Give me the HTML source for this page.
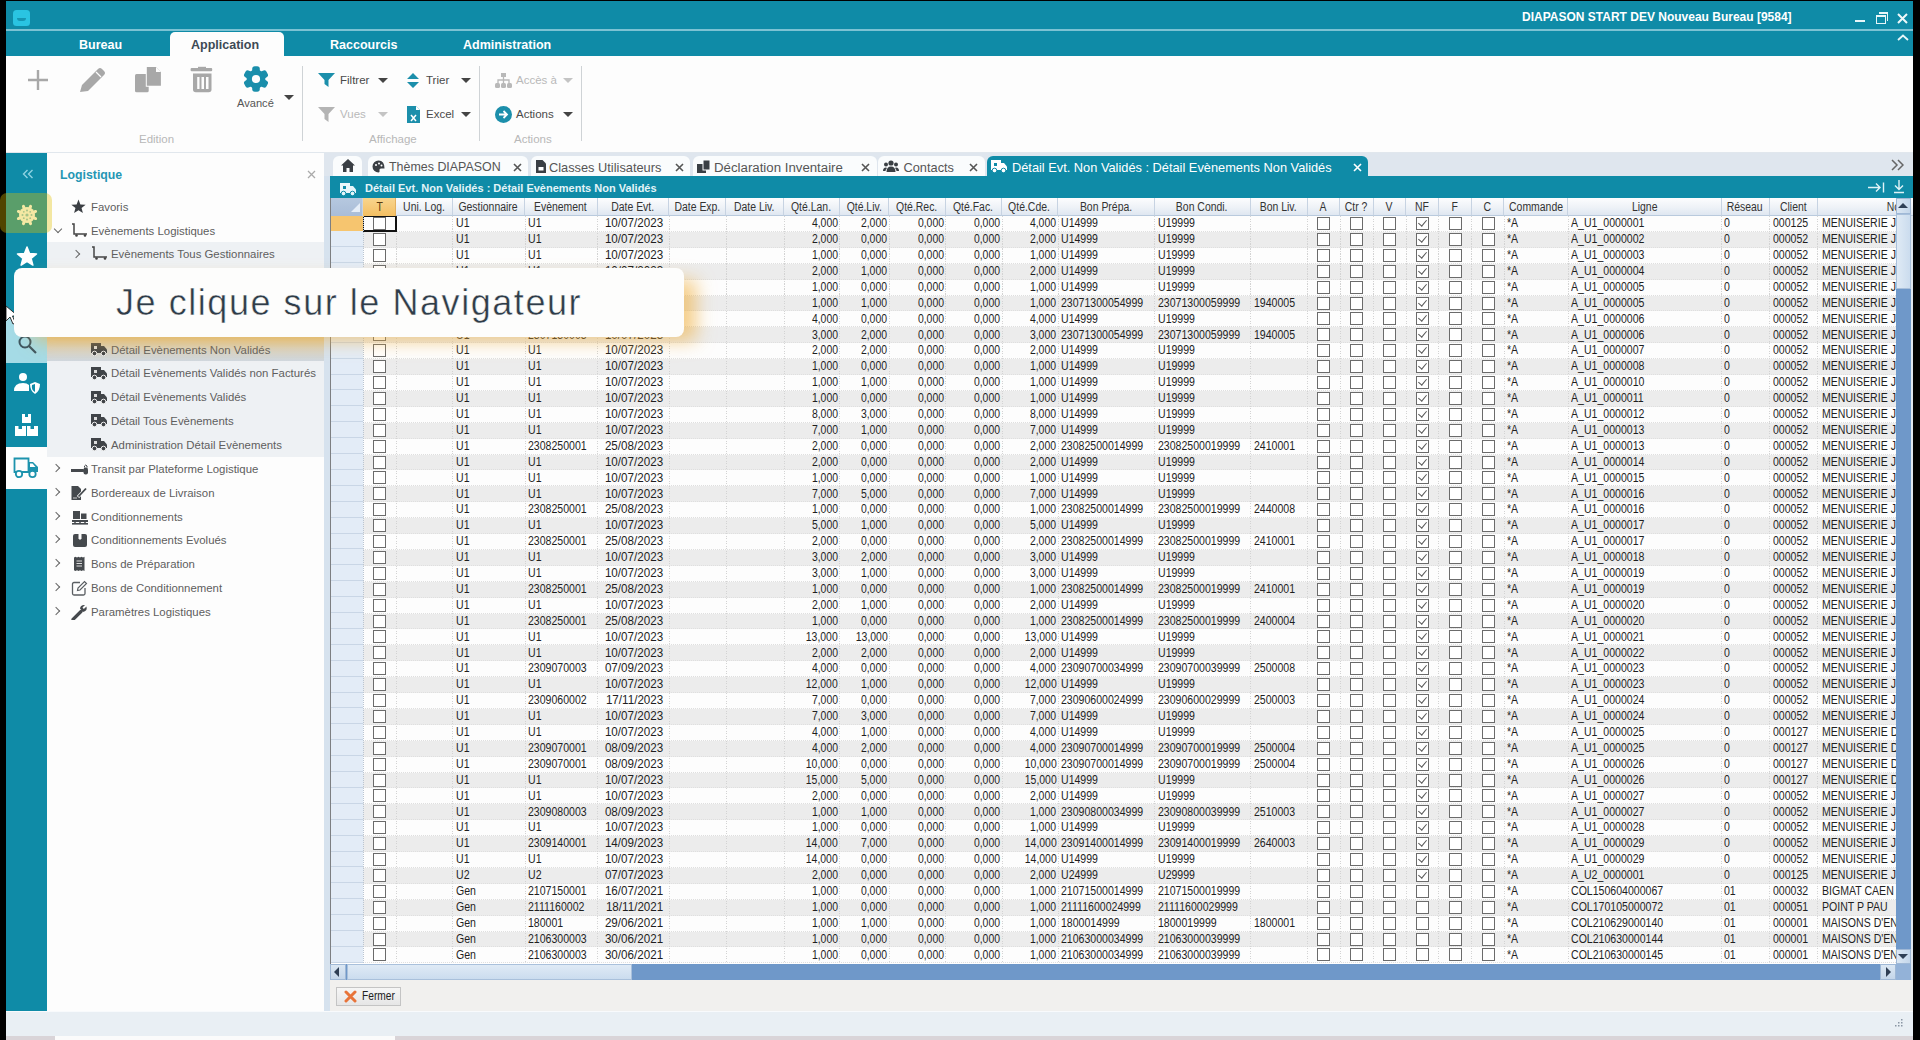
<!DOCTYPE html><html><head><meta charset="utf-8"><style>
*{margin:0;padding:0;box-sizing:border-box}
html,body{width:1920px;height:1040px;overflow:hidden;background:#000;font-family:"Liberation Sans",sans-serif}
.a{position:absolute}
#app{position:absolute;left:6px;top:1px;width:1907px;height:1035px;background:#fdfdfd;overflow:hidden}
.tt{color:#fff;font-weight:bold;white-space:nowrap}
.rb{position:absolute;font-size:11.5px;color:#4a4a4a;white-space:nowrap}
.dis{color:#b9b9b9}
.tri{position:absolute;width:0;height:0;border-left:5px solid transparent;border-right:5px solid transparent;border-top:5px solid #444}
.tri.dis{border-top-color:#c4c4c4}
.glab{position:absolute;font-size:11.5px;color:#b8b8b8;white-space:nowrap}
.vsep{position:absolute;width:1px;background:#cfd3d6}
.tr{position:absolute;font-size:11.4px;color:#5e5e5e;white-space:nowrap}
.chev{position:absolute;width:6px;height:6px;border-right:1.5px solid #666;border-bottom:1.5px solid #666}
.tab{position:absolute;top:155px;height:21px;background:#fafcfd;border-radius:6px 6px 0 0}
.tabt{position:absolute;top:159px;font-size:12.8px;color:#555;white-space:nowrap}
.tabx{position:absolute;top:159px;font-size:14px;color:#555;line-height:14px}
.hd{position:absolute;top:197.5px;height:18px;background:linear-gradient(#fdfdfe,#eef2f7 55%,#dfe7f1);border-right:1px solid #c7d3e2;border-bottom:1px solid #b9cadd;font-size:12px;color:#333;text-align:center;line-height:18.5px;white-space:nowrap;overflow:hidden}
.hd span{display:inline-block;transform:scaleX(.87)}
.row{position:absolute;left:330px;width:1566px;height:15.9px}
.cl{position:absolute;top:0.8px;height:15.9px;font-size:12px;color:#1f1f1f;line-height:15.9px;white-space:nowrap}
.cl span{display:inline-block}
.L span{transform:scaleX(.88);transform-origin:0 50%}
.R{text-align:right}
.R span{transform:scaleX(.87);transform-origin:100% 50%}
.Cc{text-align:center}
.Cc{padding-left:1.5px}
.Cc span{transform:scaleX(.97);transform-origin:50% 50%}
.cb{position:absolute;width:13px;height:13px;border:1.5px solid #6b6b6b;background:#fff}
.cb.k::after{content:"";position:absolute;left:3px;top:0px;width:4px;height:7px;border-right:1.5px solid #555;border-bottom:1.5px solid #555;transform:rotate(40deg)}
</style></head><body>
<div id="app">
<div class="a" style="left:0px;top:0px;width:1907px;height:55px;background:#0f8ba7"></div>
<div class="a" style="left:0px;top:27.8px;width:1907px;height:2.4px;background:#7cc2d3"></div>
<div class="a" style="left:7px;top:9px;width:16.5px;height:16px;background:#2ac4e2;border-radius:3.5px"></div>
<div class="a" style="left:11px;top:16.5px;width:8.5px;height:3px;background:#1596b3;border-radius:0 0 4px 4px"></div>
<div class="a tt" style="left:1516px;top:9px;font-size:12px;line-height:14px">DIAPASON START DEV Nouveau Bureau [9584]</div>
<div class="a" style="left:1849px;top:19px;width:10px;height:2px;background:#e8f6f9"></div>
<div class="a" style="left:1870px;top:14px;width:10px;height:9px;border:1.5px solid #e8f6f9;border-top-width:2.5px"></div>
<div class="a" style="left:1873px;top:11px;width:9px;height:9px;border-top:2px solid #e8f6f9;border-right:1.5px solid #e8f6f9"></div>
<svg class="a" style="left:1891px;top:12px" width="11" height="11"><path d="M1 1L10 10M10 1L1 10" stroke="#eef8fa" stroke-width="2"/></svg>
<svg class="a" style="left:1891px;top:33px" width="12" height="8"><path d="M1 6L6 1.5L11 6" stroke="#e8f6f9" stroke-width="1.8" fill="none"/></svg>
<div class="a" style="left:164px;top:31px;width:114px;height:25px;background:#fdfdfd;border-radius:5px 5px 0 0"></div>
<div class="a tt" style="left:73px;top:37px;font-size:12.5px;line-height:14px">Bureau</div>
<div class="a" style="left:185px;top:37px;font-size:12.5px;line-height:14px;color:#3d4a55;font-weight:bold;white-space:nowrap">Application</div>
<div class="a tt" style="left:324px;top:37px;font-size:12.5px;line-height:14px">Raccourcis</div>
<div class="a tt" style="left:457px;top:37px;font-size:12.5px;line-height:14px">Administration</div>
<div class="a" style="left:0px;top:55px;width:1907px;height:96px;background:#fdfdfd"></div>
<div class="a" style="left:0px;top:151px;width:1907px;height:1px;background:#e1e7ed"></div>
<svg class="a" style="left:21px;top:68px" width="22" height="22"><path d="M11 1V21M1 11H21" stroke="#a8a8a8" stroke-width="2.4"/></svg>
<svg class="a" style="left:73px;top:66px" width="28" height="27"><path d="M1 25L3 18L19 2Q21 0 23 2L25 4Q27 6 25 8L9 24Z" fill="#a8a8a8"/><path d="M17 5L22 10" stroke="#fdfdfd" stroke-width="1.2"/></svg>
<svg class="a" style="left:128px;top:65px" width="28" height="28"><rect x="1" y="8" width="13.7" height="18.3" rx="1.5" fill="#a8a8a8"/><path d="M11.8 0H22.5L27.9 5.4V20.8H11.8Z" fill="#fdfdfd"/><path d="M12.8 1H22L26.9 5.9V19.8H12.8Z" fill="#a8a8a8"/><path d="M22 1V6H27" fill="#fdfdfd"/></svg>
<svg class="a" style="left:184px;top:65px" width="24" height="28"><rect x="0.6" y="2" width="21.6" height="3.3" rx="1" fill="#a8a8a8"/><rect x="8" y="0.8" width="8" height="2" fill="#a8a8a8"/><path d="M3 7.6H21.5V23.5Q21.5 26.3 18.7 26.3H5.8Q3 26.3 3 23.5Z" fill="#a8a8a8"/><path d="M7.2 11H9.5V23H7.2ZM11.5 11H14V23H11.5ZM16 11H18.5V23H16Z" fill="#fdfdfd"/></svg>
<svg class="a" style="left:237px;top:65px" width="26" height="26"><rect x="9.2" y="0.3" width="7.6" height="7" rx="2.6" fill="#1a8eab" transform="rotate(0 13 13)"/><rect x="9.2" y="0.3" width="7.6" height="7" rx="2.6" fill="#1a8eab" transform="rotate(60 13 13)"/><rect x="9.2" y="0.3" width="7.6" height="7" rx="2.6" fill="#1a8eab" transform="rotate(120 13 13)"/><rect x="9.2" y="0.3" width="7.6" height="7" rx="2.6" fill="#1a8eab" transform="rotate(180 13 13)"/><rect x="9.2" y="0.3" width="7.6" height="7" rx="2.6" fill="#1a8eab" transform="rotate(240 13 13)"/><rect x="9.2" y="0.3" width="7.6" height="7" rx="2.6" fill="#1a8eab" transform="rotate(300 13 13)"/><circle cx="13" cy="13" r="9.4" fill="#1a8eab"/><circle cx="13" cy="13" r="4.1" fill="#fdfdfd"/></svg>
<div class="a" style="left:231px;top:96px;font-size:11.1px;line-height:13px;color:#555;white-space:nowrap">Avancé</div>
<div class="tri" style="left:278px;top:94px"></div>
<div class="glab" style="left:133px;top:132px;line-height:13px">Edition</div>
<div class="vsep" style="left:296px;top:65px;width:1px;height:75px;"></div>
<svg class="a" style="left:312px;top:72px" width="17" height="14"><path d="M0 0H17L10.5 7V14L6.5 11V7Z" fill="#1c8fab"/></svg>
<div class="rb" style="left:334px;top:73px;line-height:13px">Filtrer</div>
<div class="tri" style="left:372px;top:77px"></div>
<svg class="a" style="left:401px;top:72px" width="12" height="15"><path d="M6 0L12 6H0Z M0 9H12L6 15Z" fill="#1c8fab"/></svg>
<div class="rb" style="left:420px;top:73px;line-height:13px">Trier</div>
<div class="tri" style="left:455px;top:77px"></div>
<svg class="a" style="left:312px;top:106px" width="17" height="15"><path d="M0 0H17L10.5 7V15L6.5 12V7Z" fill="#b4b4b4"/></svg>
<div class="rb dis" style="left:334px;top:107px;line-height:13px">Vues</div>
<div class="tri dis" style="left:372px;top:111px"></div>
<svg class="a" style="left:401px;top:105px" width="13" height="17"><path d="M0 0H9L13 4V17H0Z" fill="#1c8fab"/><path d="M9 0V4H13" fill="#fff"/><path d="M4 9L9 15M9 9L4 15" stroke="#fff" stroke-width="1.5"/></svg>
<div class="rb" style="left:420px;top:107px;line-height:13px">Excel</div>
<div class="tri" style="left:455px;top:111px"></div>
<div class="glab" style="left:363px;top:132px;line-height:13px">Affichage</div>
<div class="vsep" style="left:473px;top:65px;width:1px;height:75px;"></div>
<svg class="a" style="left:489px;top:72px" width="17" height="15"><rect x="6" y="0" width="5" height="4" fill="#b9b9b9"/><path d="M8.5 4V7M3 10V7H14V10M8.5 7V10" stroke="#b9b9b9" stroke-width="1.3" fill="none"/><rect x="0" y="10" width="5" height="5" rx="1.5" fill="#b9b9b9"/><rect x="6" y="10" width="5" height="5" rx="1.5" fill="#b9b9b9"/><rect x="12" y="10" width="5" height="5" rx="1.5" fill="#b9b9b9"/></svg>
<div class="rb dis" style="left:510px;top:73px;line-height:13px">Accès à</div>
<div class="tri dis" style="left:557px;top:77px"></div>
<svg class="a" style="left:489px;top:105px" width="17" height="17"><circle cx="8.5" cy="8.5" r="8.5" fill="#1c8fab"/><path d="M4 8.5H12M8.5 5L12 8.5L8.5 12" stroke="#fff" stroke-width="1.8" fill="none"/></svg>
<div class="rb" style="left:510px;top:107px;line-height:13px">Actions</div>
<div class="tri" style="left:557px;top:111px"></div>
<div class="glab" style="left:508px;top:132px;line-height:13px">Actions</div>
<div class="vsep" style="left:575px;top:65px;width:1px;height:75px;"></div>
<div class="a" style="left:0px;top:152px;width:41px;height:858px;background:#0f8ba7"></div>
<svg class="a" style="left:16px;top:168px" width="12" height="10"><path d="M5.5 1L1.5 5L5.5 9M10.5 1L6.5 5L10.5 9" stroke="#8fd3e2" stroke-width="1.4" fill="none"/></svg>
<svg class="a" style="left:10px;top:245px" width="22" height="22"><polygon points="11.00,1.00 13.53,7.52 20.51,7.91 15.09,12.33 16.88,19.09 11.00,15.30 5.12,19.09 6.91,12.33 1.49,7.91 8.47,7.52" fill="#fff" stroke="#fff" stroke-width="1.5" stroke-linejoin="round"/></svg>
<div class="a" style="left:0px;top:316px;width:41px;height:46px;background:#a5dbe6"></div>
<svg class="a" style="left:11px;top:333px" width="22" height="22"><circle cx="8" cy="8" r="5.5" stroke="#3d5560" stroke-width="2" fill="none"/><path d="M12 12L19 19" stroke="#3d5560" stroke-width="2.2"/></svg>
<svg class="a" style="left:8px;top:371px" width="26" height="24"><circle cx="9" cy="5" r="4" fill="#fff"/><path d="M0 19Q0 11 9 11Q13 11 15 13V19Z" fill="#fff"/><path d="M16 12L21 10L26 12Q26 19 21 22Q16 19 16 12Z" fill="#fff"/><path d="M21 12V20Q17 18 18 13Z" fill="#0f8ba7"/></svg>
<svg class="a" style="left:9px;top:413px" width="24" height="23"><rect x="7" y="0" width="9" height="9" fill="#fff"/><rect x="0" y="12" width="11" height="10" fill="#fff"/><rect x="12" y="12" width="11" height="10" fill="#fff"/><path d="M10 0V3H13V0M3.5 12V15H7V12M15.5 12V15H19V12" fill="#0f8ba7"/></svg>
<div class="a" style="left:0px;top:446px;width:41px;height:42px;background:#fdfdfd"></div>
<svg class="a" style="left:7px;top:456px" width="27" height="22"><path d="M1.5 1.5H15.5V15H1.5Z" stroke="#1d93ad" stroke-width="1.8" fill="none"/><path d="M15.5 5H20L25 10V15H15.5Z" fill="#1d93ad"/><path d="M17 6.5H19.5L22.5 10H17Z" fill="#fff"/><circle cx="6" cy="17" r="3.2" fill="#fff" stroke="#1d93ad" stroke-width="1.8"/><circle cx="19.5" cy="17" r="3.2" fill="#fff" stroke="#1d93ad" stroke-width="1.8"/></svg>
<svg class="a" style="left:10px;top:203px" width="22" height="22"><path d="M17.47 13.68L19.59 14.56" stroke="#fff" stroke-width="3" stroke-linecap="round"/><path d="M13.68 17.47L14.56 19.59" stroke="#fff" stroke-width="3" stroke-linecap="round"/><path d="M8.32 17.47L7.44 19.59" stroke="#fff" stroke-width="3" stroke-linecap="round"/><path d="M4.53 13.68L2.41 14.56" stroke="#fff" stroke-width="3" stroke-linecap="round"/><path d="M4.53 8.32L2.41 7.44" stroke="#fff" stroke-width="3" stroke-linecap="round"/><path d="M8.32 4.53L7.44 2.41" stroke="#fff" stroke-width="3" stroke-linecap="round"/><path d="M13.68 4.53L14.56 2.41" stroke="#fff" stroke-width="3" stroke-linecap="round"/><path d="M17.47 8.32L19.59 7.44" stroke="#fff" stroke-width="3" stroke-linecap="round"/><circle cx="11" cy="11" r="8" fill="#fff"/><g fill="#0f8ba7" opacity=".5"><circle cx="11" cy="11" r="1.6"/><circle cx="11" cy="6.5" r="1"/><circle cx="11" cy="15.5" r="1"/><circle cx="6.5" cy="11" r="1"/><circle cx="15.5" cy="11" r="1"/><circle cx="7.8" cy="7.8" r=".9"/><circle cx="14.2" cy="14.2" r=".9"/><circle cx="14.2" cy="7.8" r=".9"/><circle cx="7.8" cy="14.2" r=".9"/></g></svg>
<div class="a" style="left:41px;top:152px;width:277px;height:858px;background:#fdfdfd"></div>
<div class="a" style="left:54px;top:166.5px;font-size:12.3px;font-weight:bold;color:#2596b4;line-height:15px;white-space:nowrap">Logistique</div>
<svg class="a" style="left:301px;top:169px" width="9" height="9"><path d="M1 1L8 8M8 1L1 8" stroke="#aaa" stroke-width="1.3"/></svg>
<svg class="a" style="left:65px;top:198px" width="15" height="15"><polygon points="7.50,0.50 9.38,5.41 14.63,5.68 10.54,8.99 11.91,14.07 7.50,11.20 3.09,14.07 4.46,8.99 0.37,5.68 5.62,5.41" fill="#3b3f44"/></svg>
<div class="tr" style="left:85px;top:199px;line-height:14px">Favoris</div>
<div class="chev" style="left:49px;top:225px;transform:rotate(45deg)"></div>
<svg class="a" style="left:65px;top:222px" width="17" height="14"><path d="M1 1H3V11H16" stroke="#444" stroke-width="1.5" fill="none"/><circle cx="5.5" cy="12.5" r="1.3" fill="#444"/><circle cx="14" cy="12.5" r="1.3" fill="#444"/></svg>
<div class="tr" style="left:85px;top:223px;line-height:14px">Evènements Logistiques</div>
<div class="a" style="left:41px;top:241px;width:277px;height:215px;background:#eef1f4"></div>
<div class="chev" style="left:67px;top:250px;transform:rotate(-45deg)"></div>
<svg class="a" style="left:85px;top:245px" width="17" height="14"><path d="M1 1H3V11H16" stroke="#444" stroke-width="1.5" fill="none"/><circle cx="5.5" cy="12.5" r="1.3" fill="#444"/><circle cx="14" cy="12.5" r="1.3" fill="#444"/></svg>
<div class="tr" style="left:105px;top:246px;line-height:14px">Evènements Tous Gestionnaires</div>
<div class="a" style="left:41px;top:336px;width:277px;height:24px;background:linear-gradient(#dcc89a,#d9d3c2 45%,#d0d7de)"></div>
<svg class="a" style="left:85px;top:270px" width="17" height="14"><path d="M0 1H10V11H0Z" fill="#404448"/><path d="M10 4H13L16 7.5V11H10Z" fill="#404448"/><circle cx="3.5" cy="11.5" r="2.3" fill="#404448" stroke="#eee" stroke-width="1"/><circle cx="12.5" cy="11.5" r="2.3" fill="#404448" stroke="#eee" stroke-width="1"/><path d="M3 4H6V7H3Z" fill="#ddd"/></svg>
<div class="tr" style="left:105px;top:270.5px;line-height:14px">Evènements par Gestionnaire</div>
<svg class="a" style="left:85px;top:294px" width="17" height="14"><path d="M0 1H10V11H0Z" fill="#404448"/><path d="M10 4H13L16 7.5V11H10Z" fill="#404448"/><circle cx="3.5" cy="11.5" r="2.3" fill="#404448" stroke="#eee" stroke-width="1"/><circle cx="12.5" cy="11.5" r="2.3" fill="#404448" stroke="#eee" stroke-width="1"/><path d="M3 4H6V7H3Z" fill="#ddd"/></svg>
<div class="tr" style="left:105px;top:294.3px;line-height:14px">Evènements Non Validés</div>
<svg class="a" style="left:85px;top:318px" width="17" height="14"><path d="M0 1H10V11H0Z" fill="#404448"/><path d="M10 4H13L16 7.5V11H10Z" fill="#404448"/><circle cx="3.5" cy="11.5" r="2.3" fill="#404448" stroke="#eee" stroke-width="1"/><circle cx="12.5" cy="11.5" r="2.3" fill="#404448" stroke="#eee" stroke-width="1"/><path d="M3 4H6V7H3Z" fill="#ddd"/></svg>
<div class="tr" style="left:105px;top:318px;line-height:14px">Evènements Validés</div>
<svg class="a" style="left:85px;top:341px" width="17" height="14"><path d="M0 1H10V11H0Z" fill="#404448"/><path d="M10 4H13L16 7.5V11H10Z" fill="#404448"/><circle cx="3.5" cy="11.5" r="2.3" fill="#404448" stroke="#eee" stroke-width="1"/><circle cx="12.5" cy="11.5" r="2.3" fill="#404448" stroke="#eee" stroke-width="1"/><path d="M3 4H6V7H3Z" fill="#ddd"/></svg>
<div class="tr" style="left:105px;top:341.7px;line-height:14px">Détail Evènements Non Validés</div>
<svg class="a" style="left:85px;top:365px" width="17" height="14"><path d="M0 1H10V11H0Z" fill="#404448"/><path d="M10 4H13L16 7.5V11H10Z" fill="#404448"/><circle cx="3.5" cy="11.5" r="2.3" fill="#404448" stroke="#eee" stroke-width="1"/><circle cx="12.5" cy="11.5" r="2.3" fill="#404448" stroke="#eee" stroke-width="1"/><path d="M3 4H6V7H3Z" fill="#ddd"/></svg>
<div class="tr" style="left:105px;top:365.4px;line-height:14px">Détail Evènements Validés non Facturés</div>
<svg class="a" style="left:85px;top:389px" width="17" height="14"><path d="M0 1H10V11H0Z" fill="#404448"/><path d="M10 4H13L16 7.5V11H10Z" fill="#404448"/><circle cx="3.5" cy="11.5" r="2.3" fill="#404448" stroke="#eee" stroke-width="1"/><circle cx="12.5" cy="11.5" r="2.3" fill="#404448" stroke="#eee" stroke-width="1"/><path d="M3 4H6V7H3Z" fill="#ddd"/></svg>
<div class="tr" style="left:105px;top:389.1px;line-height:14px">Détail Evènements Validés</div>
<svg class="a" style="left:85px;top:412px" width="17" height="14"><path d="M0 1H10V11H0Z" fill="#404448"/><path d="M10 4H13L16 7.5V11H10Z" fill="#404448"/><circle cx="3.5" cy="11.5" r="2.3" fill="#404448" stroke="#eee" stroke-width="1"/><circle cx="12.5" cy="11.5" r="2.3" fill="#404448" stroke="#eee" stroke-width="1"/><path d="M3 4H6V7H3Z" fill="#ddd"/></svg>
<div class="tr" style="left:105px;top:412.8px;line-height:14px">Détail Tous Evènements</div>
<svg class="a" style="left:85px;top:436px" width="17" height="14"><path d="M0 1H10V11H0Z" fill="#404448"/><path d="M10 4H13L16 7.5V11H10Z" fill="#404448"/><circle cx="3.5" cy="11.5" r="2.3" fill="#404448" stroke="#eee" stroke-width="1"/><circle cx="12.5" cy="11.5" r="2.3" fill="#404448" stroke="#eee" stroke-width="1"/><path d="M3 4H6V7H3Z" fill="#ddd"/></svg>
<div class="tr" style="left:105px;top:436.5px;line-height:14px">Administration Détail Evènements</div>
<div class="chev" style="left:47px;top:464.2px;transform:rotate(-45deg)"></div>
<svg class="a" style="left:65px;top:460.2px" width="18" height="16"><path d="M0.5 9.5H12" stroke="#45494d" stroke-width="3" stroke-linecap="round"/><rect x="12.5" y="6.5" width="4.5" height="7" rx="2" fill="#45494d"/><path d="M13.5 6.5V5Q14.75 3 16 5V6.5" stroke="#45494d" stroke-width="1" fill="none"/></svg>
<div class="tr" style="left:85px;top:461.2px;line-height:14px">Transit par Plateforme Logistique</div>
<div class="chev" style="left:47px;top:487.9px;transform:rotate(-45deg)"></div>
<svg class="a" style="left:65px;top:483.9px" width="18" height="16"><path d="M0.5 1H7L10 4V15H0.5Z" fill="#45494d"/><path d="M7 12L15 3.5" stroke="#fdfdfd" stroke-width="3.2"/><path d="M7.5 11.5L15 3.5" stroke="#45494d" stroke-width="1.8"/><path d="M2 13H6" stroke="#ccc" stroke-width="1"/></svg>
<div class="tr" style="left:85px;top:484.9px;line-height:14px">Bordereaux de Livraison</div>
<div class="chev" style="left:47px;top:511.7px;transform:rotate(-45deg)"></div>
<svg class="a" style="left:65px;top:507.7px" width="18" height="16"><rect x="2" y="2" width="7" height="8" fill="#45494d"/><rect x="10" y="4.5" width="5.5" height="5.5" fill="#45494d"/><rect x="1" y="11" width="16" height="2" fill="#45494d"/><rect x="1" y="14" width="16" height="1.6" fill="#45494d"/><path d="M4 13V14M9 13V14M14 13V14" stroke="#45494d" stroke-width="1.5"/></svg>
<div class="tr" style="left:85px;top:508.70000000000005px;line-height:14px">Conditionnements</div>
<div class="chev" style="left:47px;top:535.4px;transform:rotate(-45deg)"></div>
<svg class="a" style="left:65px;top:531.4px" width="18" height="16"><path d="M2 4Q2 2 4 2H14Q16 2 16 4V13Q16 15 14 15H4Q2 15 2 13Z" fill="#45494d"/><path d="M7.5 2V6.5L9 8L10.5 6.5V2Z" fill="#fdfdfd"/></svg>
<div class="tr" style="left:85px;top:532.4px;line-height:14px">Conditionnements Evolués</div>
<div class="chev" style="left:47px;top:559.2px;transform:rotate(-45deg)"></div>
<svg class="a" style="left:65px;top:555.2px" width="18" height="16"><path d="M3 1.5L4.5 0.8L6 1.5L7.5 0.8L9 1.5L10.5 0.8L12 1.5L13.5 0.8V15L12 14.3L10.5 15L9 14.3L7.5 15L6 14.3L4.5 15L3 14.3Z" fill="#45494d"/><path d="M5.5 5H11M5.5 7.5H11M5.5 10H11" stroke="#ddd" stroke-width="1"/></svg>
<div class="tr" style="left:85px;top:556.2px;line-height:14px">Bons de Préparation</div>
<div class="chev" style="left:47px;top:583.0px;transform:rotate(-45deg)"></div>
<svg class="a" style="left:65px;top:579.0px" width="18" height="16"><path d="M9 2.5H3Q1.5 2.5 1.5 4V13.5Q1.5 15 3 15H12.5Q14 15 14 13.5V8" stroke="#5a5e62" stroke-width="1.3" fill="none"/><path d="M6.5 10.5L7 8L13.5 1.5L15.5 3.5L9 10Z" stroke="#5a5e62" stroke-width="1.2" fill="none"/></svg>
<div class="tr" style="left:85px;top:580px;line-height:14px">Bons de Conditionnement</div>
<div class="chev" style="left:47px;top:606.7px;transform:rotate(-45deg)"></div>
<svg class="a" style="left:65px;top:602.7px" width="18" height="16"><path d="M2 15.5L10 7.5" stroke="#45494d" stroke-width="3.2" stroke-linecap="round"/><path d="M9 4.5Q9.5 0.5 14 1L11.5 3.5L12.8 5L15.5 2.5Q16.5 7 12 8Z" fill="#45494d"/></svg>
<div class="tr" style="left:85px;top:603.7px;line-height:14px">Paramètres Logistiques</div>
<div class="a" style="left:318px;top:152px;width:1589px;height:858px;background:#dfe6ee"></div>
<div class="a" style="left:318px;top:175px;width:6px;height:835px;background:#d6e2ee"></div>
<div class="tab" style="left:327px;width:29px;background:#fafcfd"></div>
<svg class="a" style="left:335px;top:158px" width="14" height="13"><path d="M7 0L14 6.5H12V13H8.5V9H5.5V13H2V6.5H0Z" fill="#3a3f44"/></svg>
<div class="tab" style="left:362px;width:160px;background:#fafcfd"></div><div class="tabt" style="left:383px;color:#555;font-size:12.45px">Thèmes DIAPASON</div><svg class="a" style="left:507px;top:162px" width="9" height="9"><path d="M1 1L8 8M8 1L1 8" stroke="#555" stroke-width="1.6"/></svg>
<svg class="a" style="left:366px;top:159px" width="13" height="13"><path d="M6.5 0.5A6 6 0 1 0 6.5 12.5Q8 12.5 7.5 10.5Q7 8.5 9 8.5H12.5Q12.5 0.5 6.5 0.5Z" fill="#3a3f44"/><circle cx="4" cy="5" r="1" fill="#fff"/><circle cx="7" cy="3.5" r="1" fill="#fff"/><circle cx="9.5" cy="5.5" r="1" fill="#fff"/></svg>
<div class="tab" style="left:524.5px;width:159.5px;background:#fafcfd"></div><div class="tabt" style="left:543px;color:#555;font-size:12.8px">Classes Utilisateurs</div><svg class="a" style="left:669px;top:162px" width="9" height="9"><path d="M1 1L8 8M8 1L1 8" stroke="#555" stroke-width="1.6"/></svg>
<svg class="a" style="left:530px;top:159px" width="10" height="13"><path d="M0 0H6.5L10 3.5V13H0Z" fill="#3a3f44"/><rect x="2.5" y="7" width="5" height="3.5" fill="#fff"/></svg>
<div class="tab" style="left:686.5px;width:184.0px;background:#fafcfd"></div><div class="tabt" style="left:708px;color:#555;font-size:13.25px">Déclaration Inventaire</div><svg class="a" style="left:855px;top:162px" width="9" height="9"><path d="M1 1L8 8M8 1L1 8" stroke="#555" stroke-width="1.6"/></svg>
<svg class="a" style="left:691px;top:159px" width="13" height="13"><rect x="0" y="4" width="9" height="9" fill="#3a3f44"/><rect x="6" y="0" width="7" height="10" fill="#3a3f44" stroke="#fafcfd" stroke-width="1"/></svg>
<div class="tab" style="left:872px;width:107px;background:#fafcfd"></div><div class="tabt" style="left:897.5px;color:#555;font-size:12.8px">Contacts</div><svg class="a" style="left:963px;top:162px" width="9" height="9"><path d="M1 1L8 8M8 1L1 8" stroke="#555" stroke-width="1.6"/></svg>
<svg class="a" style="left:877px;top:159px" width="16" height="12"><circle cx="8" cy="3" r="2.6" fill="#3a3f44"/><circle cx="3" cy="4.5" r="2" fill="#3a3f44"/><circle cx="13" cy="4.5" r="2" fill="#3a3f44"/><path d="M3.5 12Q3.5 6.5 8 6.5Q12.5 6.5 12.5 12Z M0 11Q0 7.5 3 7.5L4 8Q2.5 9.5 2.5 11Z M16 11Q16 7.5 13 7.5L12 8Q13.5 9.5 13.5 11Z" fill="#3a3f44"/></svg>
<div class="tab" style="left:980.5px;width:381.0px;background:#0f8ba7"></div><div class="tabt" style="left:1006px;color:#fff;font-size:12.8px">Détail Evt. Non Validés : Détail Evènements Non Validés</div><svg class="a" style="left:1347px;top:162px" width="9" height="9"><path d="M1 1L8 8M8 1L1 8" stroke="#fff" stroke-width="1.6"/></svg>
<svg class="a" style="left:985px;top:158px" width="16" height="14"><path d="M0 1H10V11H0Z" fill="#fff"/><path d="M10 4H13L16 7.5V11H10Z" fill="#fff"/><circle cx="3.5" cy="11.5" r="2.3" fill="#fff" stroke="#0f8ba7" stroke-width="1"/><circle cx="12.5" cy="11.5" r="2.3" fill="#fff" stroke="#0f8ba7" stroke-width="1"/><path d="M3 4H6V7H3Z" fill="#0f8ba7"/></svg>
<svg class="a" style="left:1885px;top:158px" width="13" height="12"><path d="M1 1L6 6L1 11M7 1L12 6L7 11" stroke="#666" stroke-width="1.5" fill="none"/></svg>
<div class="a" style="left:323.5px;top:175px;width:1583.5px;height:21.5px;background:#0f8ba7"></div>
<svg class="a" style="left:334px;top:181px" width="16" height="14"><path d="M0 1H10V11H0Z" fill="#e8f6fa"/><path d="M10 4H13L16 7.5V11H10Z" fill="#e8f6fa"/><circle cx="3.5" cy="11.5" r="2.3" fill="#e8f6fa" stroke="#0f8ba7" stroke-width="1"/><circle cx="12.5" cy="11.5" r="2.3" fill="#e8f6fa" stroke="#0f8ba7" stroke-width="1"/><path d="M3 4H6V7H3Z" fill="#0f8ba7"/></svg>
<div class="a" style="left:359px;top:180.7px;font-size:11px;line-height:13px;color:#e3f4f8;font-weight:bold;white-space:nowrap">Détail Evt. Non Validés : Détail Evènements Non Validés</div>
<svg class="a" style="left:1862px;top:181px" width="18" height="11"><path d="M0 5.5H12M8 1.5L12 5.5L8 9.5M15.5 0.5V10.5" stroke="#dff3f7" stroke-width="1.4" fill="none"/></svg>
<svg class="a" style="left:1887px;top:179px" width="12" height="14"><path d="M6 0V9M2 5.5L6 9.5L10 5.5M1 12.5H11" stroke="#dff3f7" stroke-width="1.4" fill="none"/></svg>
<div class="a" style="left:324px;top:196.5px;width:1565.6px;height:766px;background:#fff;overflow:hidden"></div>
<div class="a" style="left:357px;top:214.5px;width:1532.6px;height:747.3000000000001px;background:repeating-linear-gradient(#fdfdfd 0,#fdfdfd 15.9px,#ececec 15.9px,#ececec 31.8px)"></div>
<div class="a" style="left:324px;top:214.5px;width:33px;height:747.3000000000001px;background:#e3ecf7"></div>
<div class="a" style="left:324px;top:229.4px;width:33px;height:1px;background:#c9d6e6"></div>
<div class="a" style="left:324px;top:245.3px;width:33px;height:1px;background:#c9d6e6"></div>
<div class="a" style="left:324px;top:261.2px;width:33px;height:1px;background:#c9d6e6"></div>
<div class="a" style="left:324px;top:277.09999999999997px;width:33px;height:1px;background:#c9d6e6"></div>
<div class="a" style="left:324px;top:293.0px;width:33px;height:1px;background:#c9d6e6"></div>
<div class="a" style="left:324px;top:308.9px;width:33px;height:1px;background:#c9d6e6"></div>
<div class="a" style="left:324px;top:324.79999999999995px;width:33px;height:1px;background:#c9d6e6"></div>
<div class="a" style="left:324px;top:340.7px;width:33px;height:1px;background:#c9d6e6"></div>
<div class="a" style="left:324px;top:356.59999999999997px;width:33px;height:1px;background:#c9d6e6"></div>
<div class="a" style="left:324px;top:372.5px;width:33px;height:1px;background:#c9d6e6"></div>
<div class="a" style="left:324px;top:388.4px;width:33px;height:1px;background:#c9d6e6"></div>
<div class="a" style="left:324px;top:404.29999999999995px;width:33px;height:1px;background:#c9d6e6"></div>
<div class="a" style="left:324px;top:420.2px;width:33px;height:1px;background:#c9d6e6"></div>
<div class="a" style="left:324px;top:436.1px;width:33px;height:1px;background:#c9d6e6"></div>
<div class="a" style="left:324px;top:452.0px;width:33px;height:1px;background:#c9d6e6"></div>
<div class="a" style="left:324px;top:467.9px;width:33px;height:1px;background:#c9d6e6"></div>
<div class="a" style="left:324px;top:483.79999999999995px;width:33px;height:1px;background:#c9d6e6"></div>
<div class="a" style="left:324px;top:499.7px;width:33px;height:1px;background:#c9d6e6"></div>
<div class="a" style="left:324px;top:515.6px;width:33px;height:1px;background:#c9d6e6"></div>
<div class="a" style="left:324px;top:531.5px;width:33px;height:1px;background:#c9d6e6"></div>
<div class="a" style="left:324px;top:547.4px;width:33px;height:1px;background:#c9d6e6"></div>
<div class="a" style="left:324px;top:563.3000000000001px;width:33px;height:1px;background:#c9d6e6"></div>
<div class="a" style="left:324px;top:579.1999999999999px;width:33px;height:1px;background:#c9d6e6"></div>
<div class="a" style="left:324px;top:595.1px;width:33px;height:1px;background:#c9d6e6"></div>
<div class="a" style="left:324px;top:611.0px;width:33px;height:1px;background:#c9d6e6"></div>
<div class="a" style="left:324px;top:626.9px;width:33px;height:1px;background:#c9d6e6"></div>
<div class="a" style="left:324px;top:642.8000000000001px;width:33px;height:1px;background:#c9d6e6"></div>
<div class="a" style="left:324px;top:658.6999999999999px;width:33px;height:1px;background:#c9d6e6"></div>
<div class="a" style="left:324px;top:674.6px;width:33px;height:1px;background:#c9d6e6"></div>
<div class="a" style="left:324px;top:690.5px;width:33px;height:1px;background:#c9d6e6"></div>
<div class="a" style="left:324px;top:706.4px;width:33px;height:1px;background:#c9d6e6"></div>
<div class="a" style="left:324px;top:722.3000000000001px;width:33px;height:1px;background:#c9d6e6"></div>
<div class="a" style="left:324px;top:738.1999999999999px;width:33px;height:1px;background:#c9d6e6"></div>
<div class="a" style="left:324px;top:754.1px;width:33px;height:1px;background:#c9d6e6"></div>
<div class="a" style="left:324px;top:770.0px;width:33px;height:1px;background:#c9d6e6"></div>
<div class="a" style="left:324px;top:785.9px;width:33px;height:1px;background:#c9d6e6"></div>
<div class="a" style="left:324px;top:801.8px;width:33px;height:1px;background:#c9d6e6"></div>
<div class="a" style="left:324px;top:817.7px;width:33px;height:1px;background:#c9d6e6"></div>
<div class="a" style="left:324px;top:833.6px;width:33px;height:1px;background:#c9d6e6"></div>
<div class="a" style="left:324px;top:849.5px;width:33px;height:1px;background:#c9d6e6"></div>
<div class="a" style="left:324px;top:865.4px;width:33px;height:1px;background:#c9d6e6"></div>
<div class="a" style="left:324px;top:881.3px;width:33px;height:1px;background:#c9d6e6"></div>
<div class="a" style="left:324px;top:897.2px;width:33px;height:1px;background:#c9d6e6"></div>
<div class="a" style="left:324px;top:913.1px;width:33px;height:1px;background:#c9d6e6"></div>
<div class="a" style="left:324px;top:929.0px;width:33px;height:1px;background:#c9d6e6"></div>
<div class="a" style="left:324px;top:944.9px;width:33px;height:1px;background:#c9d6e6"></div>
<div class="a" style="left:324px;top:960.8px;width:33px;height:1px;background:#c9d6e6"></div>
<div class="a" style="left:357px;top:229.9px;width:1532.6px;height:1px;background:repeating-linear-gradient(90deg,#dfdfdf 0,#dfdfdf 1px,transparent 1px,transparent 2px)"></div>
<div class="a" style="left:357px;top:245.8px;width:1532.6px;height:1px;background:repeating-linear-gradient(90deg,#dfdfdf 0,#dfdfdf 1px,transparent 1px,transparent 2px)"></div>
<div class="a" style="left:357px;top:261.7px;width:1532.6px;height:1px;background:repeating-linear-gradient(90deg,#dfdfdf 0,#dfdfdf 1px,transparent 1px,transparent 2px)"></div>
<div class="a" style="left:357px;top:277.6px;width:1532.6px;height:1px;background:repeating-linear-gradient(90deg,#dfdfdf 0,#dfdfdf 1px,transparent 1px,transparent 2px)"></div>
<div class="a" style="left:357px;top:293.5px;width:1532.6px;height:1px;background:repeating-linear-gradient(90deg,#dfdfdf 0,#dfdfdf 1px,transparent 1px,transparent 2px)"></div>
<div class="a" style="left:357px;top:309.4px;width:1532.6px;height:1px;background:repeating-linear-gradient(90deg,#dfdfdf 0,#dfdfdf 1px,transparent 1px,transparent 2px)"></div>
<div class="a" style="left:357px;top:325.3px;width:1532.6px;height:1px;background:repeating-linear-gradient(90deg,#dfdfdf 0,#dfdfdf 1px,transparent 1px,transparent 2px)"></div>
<div class="a" style="left:357px;top:341.2px;width:1532.6px;height:1px;background:repeating-linear-gradient(90deg,#dfdfdf 0,#dfdfdf 1px,transparent 1px,transparent 2px)"></div>
<div class="a" style="left:357px;top:357.1px;width:1532.6px;height:1px;background:repeating-linear-gradient(90deg,#dfdfdf 0,#dfdfdf 1px,transparent 1px,transparent 2px)"></div>
<div class="a" style="left:357px;top:373.0px;width:1532.6px;height:1px;background:repeating-linear-gradient(90deg,#dfdfdf 0,#dfdfdf 1px,transparent 1px,transparent 2px)"></div>
<div class="a" style="left:357px;top:388.9px;width:1532.6px;height:1px;background:repeating-linear-gradient(90deg,#dfdfdf 0,#dfdfdf 1px,transparent 1px,transparent 2px)"></div>
<div class="a" style="left:357px;top:404.8px;width:1532.6px;height:1px;background:repeating-linear-gradient(90deg,#dfdfdf 0,#dfdfdf 1px,transparent 1px,transparent 2px)"></div>
<div class="a" style="left:357px;top:420.70000000000005px;width:1532.6px;height:1px;background:repeating-linear-gradient(90deg,#dfdfdf 0,#dfdfdf 1px,transparent 1px,transparent 2px)"></div>
<div class="a" style="left:357px;top:436.6px;width:1532.6px;height:1px;background:repeating-linear-gradient(90deg,#dfdfdf 0,#dfdfdf 1px,transparent 1px,transparent 2px)"></div>
<div class="a" style="left:357px;top:452.5px;width:1532.6px;height:1px;background:repeating-linear-gradient(90deg,#dfdfdf 0,#dfdfdf 1px,transparent 1px,transparent 2px)"></div>
<div class="a" style="left:357px;top:468.4px;width:1532.6px;height:1px;background:repeating-linear-gradient(90deg,#dfdfdf 0,#dfdfdf 1px,transparent 1px,transparent 2px)"></div>
<div class="a" style="left:357px;top:484.3px;width:1532.6px;height:1px;background:repeating-linear-gradient(90deg,#dfdfdf 0,#dfdfdf 1px,transparent 1px,transparent 2px)"></div>
<div class="a" style="left:357px;top:500.2px;width:1532.6px;height:1px;background:repeating-linear-gradient(90deg,#dfdfdf 0,#dfdfdf 1px,transparent 1px,transparent 2px)"></div>
<div class="a" style="left:357px;top:516.1px;width:1532.6px;height:1px;background:repeating-linear-gradient(90deg,#dfdfdf 0,#dfdfdf 1px,transparent 1px,transparent 2px)"></div>
<div class="a" style="left:357px;top:532.0px;width:1532.6px;height:1px;background:repeating-linear-gradient(90deg,#dfdfdf 0,#dfdfdf 1px,transparent 1px,transparent 2px)"></div>
<div class="a" style="left:357px;top:547.9000000000001px;width:1532.6px;height:1px;background:repeating-linear-gradient(90deg,#dfdfdf 0,#dfdfdf 1px,transparent 1px,transparent 2px)"></div>
<div class="a" style="left:357px;top:563.8px;width:1532.6px;height:1px;background:repeating-linear-gradient(90deg,#dfdfdf 0,#dfdfdf 1px,transparent 1px,transparent 2px)"></div>
<div class="a" style="left:357px;top:579.7px;width:1532.6px;height:1px;background:repeating-linear-gradient(90deg,#dfdfdf 0,#dfdfdf 1px,transparent 1px,transparent 2px)"></div>
<div class="a" style="left:357px;top:595.6px;width:1532.6px;height:1px;background:repeating-linear-gradient(90deg,#dfdfdf 0,#dfdfdf 1px,transparent 1px,transparent 2px)"></div>
<div class="a" style="left:357px;top:611.5px;width:1532.6px;height:1px;background:repeating-linear-gradient(90deg,#dfdfdf 0,#dfdfdf 1px,transparent 1px,transparent 2px)"></div>
<div class="a" style="left:357px;top:627.4000000000001px;width:1532.6px;height:1px;background:repeating-linear-gradient(90deg,#dfdfdf 0,#dfdfdf 1px,transparent 1px,transparent 2px)"></div>
<div class="a" style="left:357px;top:643.3px;width:1532.6px;height:1px;background:repeating-linear-gradient(90deg,#dfdfdf 0,#dfdfdf 1px,transparent 1px,transparent 2px)"></div>
<div class="a" style="left:357px;top:659.2px;width:1532.6px;height:1px;background:repeating-linear-gradient(90deg,#dfdfdf 0,#dfdfdf 1px,transparent 1px,transparent 2px)"></div>
<div class="a" style="left:357px;top:675.1px;width:1532.6px;height:1px;background:repeating-linear-gradient(90deg,#dfdfdf 0,#dfdfdf 1px,transparent 1px,transparent 2px)"></div>
<div class="a" style="left:357px;top:691.0px;width:1532.6px;height:1px;background:repeating-linear-gradient(90deg,#dfdfdf 0,#dfdfdf 1px,transparent 1px,transparent 2px)"></div>
<div class="a" style="left:357px;top:706.9000000000001px;width:1532.6px;height:1px;background:repeating-linear-gradient(90deg,#dfdfdf 0,#dfdfdf 1px,transparent 1px,transparent 2px)"></div>
<div class="a" style="left:357px;top:722.8px;width:1532.6px;height:1px;background:repeating-linear-gradient(90deg,#dfdfdf 0,#dfdfdf 1px,transparent 1px,transparent 2px)"></div>
<div class="a" style="left:357px;top:738.7px;width:1532.6px;height:1px;background:repeating-linear-gradient(90deg,#dfdfdf 0,#dfdfdf 1px,transparent 1px,transparent 2px)"></div>
<div class="a" style="left:357px;top:754.6px;width:1532.6px;height:1px;background:repeating-linear-gradient(90deg,#dfdfdf 0,#dfdfdf 1px,transparent 1px,transparent 2px)"></div>
<div class="a" style="left:357px;top:770.5px;width:1532.6px;height:1px;background:repeating-linear-gradient(90deg,#dfdfdf 0,#dfdfdf 1px,transparent 1px,transparent 2px)"></div>
<div class="a" style="left:357px;top:786.4px;width:1532.6px;height:1px;background:repeating-linear-gradient(90deg,#dfdfdf 0,#dfdfdf 1px,transparent 1px,transparent 2px)"></div>
<div class="a" style="left:357px;top:802.3000000000001px;width:1532.6px;height:1px;background:repeating-linear-gradient(90deg,#dfdfdf 0,#dfdfdf 1px,transparent 1px,transparent 2px)"></div>
<div class="a" style="left:357px;top:818.2px;width:1532.6px;height:1px;background:repeating-linear-gradient(90deg,#dfdfdf 0,#dfdfdf 1px,transparent 1px,transparent 2px)"></div>
<div class="a" style="left:357px;top:834.1px;width:1532.6px;height:1px;background:repeating-linear-gradient(90deg,#dfdfdf 0,#dfdfdf 1px,transparent 1px,transparent 2px)"></div>
<div class="a" style="left:357px;top:850.0px;width:1532.6px;height:1px;background:repeating-linear-gradient(90deg,#dfdfdf 0,#dfdfdf 1px,transparent 1px,transparent 2px)"></div>
<div class="a" style="left:357px;top:865.9px;width:1532.6px;height:1px;background:repeating-linear-gradient(90deg,#dfdfdf 0,#dfdfdf 1px,transparent 1px,transparent 2px)"></div>
<div class="a" style="left:357px;top:881.8000000000001px;width:1532.6px;height:1px;background:repeating-linear-gradient(90deg,#dfdfdf 0,#dfdfdf 1px,transparent 1px,transparent 2px)"></div>
<div class="a" style="left:357px;top:897.7px;width:1532.6px;height:1px;background:repeating-linear-gradient(90deg,#dfdfdf 0,#dfdfdf 1px,transparent 1px,transparent 2px)"></div>
<div class="a" style="left:357px;top:913.6px;width:1532.6px;height:1px;background:repeating-linear-gradient(90deg,#dfdfdf 0,#dfdfdf 1px,transparent 1px,transparent 2px)"></div>
<div class="a" style="left:357px;top:929.5px;width:1532.6px;height:1px;background:repeating-linear-gradient(90deg,#dfdfdf 0,#dfdfdf 1px,transparent 1px,transparent 2px)"></div>
<div class="a" style="left:357px;top:945.4px;width:1532.6px;height:1px;background:repeating-linear-gradient(90deg,#dfdfdf 0,#dfdfdf 1px,transparent 1px,transparent 2px)"></div>
<div class="a" style="left:357px;top:961.3000000000001px;width:1532.6px;height:1px;background:repeating-linear-gradient(90deg,#dfdfdf 0,#dfdfdf 1px,transparent 1px,transparent 2px)"></div>
<div class="a" style="left:389.5px;top:214.5px;width:1px;height:747.3000000000001px;background:repeating-linear-gradient(#d3d3d3 0,#d3d3d3 1px,transparent 1px,transparent 2.5px)"></div>
<div class="a" style="left:446.0px;top:214.5px;width:1px;height:747.3000000000001px;background:repeating-linear-gradient(#d3d3d3 0,#d3d3d3 1px,transparent 1px,transparent 2.5px)"></div>
<div class="a" style="left:518.5px;top:214.5px;width:1px;height:747.3000000000001px;background:repeating-linear-gradient(#d3d3d3 0,#d3d3d3 1px,transparent 1px,transparent 2.5px)"></div>
<div class="a" style="left:591.0px;top:214.5px;width:1px;height:747.3000000000001px;background:repeating-linear-gradient(#d3d3d3 0,#d3d3d3 1px,transparent 1px,transparent 2.5px)"></div>
<div class="a" style="left:662.8px;top:214.5px;width:1px;height:747.3000000000001px;background:repeating-linear-gradient(#d3d3d3 0,#d3d3d3 1px,transparent 1px,transparent 2.5px)"></div>
<div class="a" style="left:719.5px;top:214.5px;width:1px;height:747.3000000000001px;background:repeating-linear-gradient(#d3d3d3 0,#d3d3d3 1px,transparent 1px,transparent 2.5px)"></div>
<div class="a" style="left:777.5px;top:214.5px;width:1px;height:747.3000000000001px;background:repeating-linear-gradient(#d3d3d3 0,#d3d3d3 1px,transparent 1px,transparent 2.5px)"></div>
<div class="a" style="left:833.0px;top:214.5px;width:1px;height:747.3000000000001px;background:repeating-linear-gradient(#d3d3d3 0,#d3d3d3 1px,transparent 1px,transparent 2.5px)"></div>
<div class="a" style="left:882.5px;top:214.5px;width:1px;height:747.3000000000001px;background:repeating-linear-gradient(#d3d3d3 0,#d3d3d3 1px,transparent 1px,transparent 2.5px)"></div>
<div class="a" style="left:939.0px;top:214.5px;width:1px;height:747.3000000000001px;background:repeating-linear-gradient(#d3d3d3 0,#d3d3d3 1px,transparent 1px,transparent 2.5px)"></div>
<div class="a" style="left:995.5px;top:214.5px;width:1px;height:747.3000000000001px;background:repeating-linear-gradient(#d3d3d3 0,#d3d3d3 1px,transparent 1px,transparent 2.5px)"></div>
<div class="a" style="left:1051.5px;top:214.5px;width:1px;height:747.3000000000001px;background:repeating-linear-gradient(#d3d3d3 0,#d3d3d3 1px,transparent 1px,transparent 2.5px)"></div>
<div class="a" style="left:1148.0px;top:214.5px;width:1px;height:747.3000000000001px;background:repeating-linear-gradient(#d3d3d3 0,#d3d3d3 1px,transparent 1px,transparent 2.5px)"></div>
<div class="a" style="left:1244.0px;top:214.5px;width:1px;height:747.3000000000001px;background:repeating-linear-gradient(#d3d3d3 0,#d3d3d3 1px,transparent 1px,transparent 2.5px)"></div>
<div class="a" style="left:1301.0px;top:214.5px;width:1px;height:747.3000000000001px;background:repeating-linear-gradient(#d3d3d3 0,#d3d3d3 1px,transparent 1px,transparent 2.5px)"></div>
<div class="a" style="left:1333.5px;top:214.5px;width:1px;height:747.3000000000001px;background:repeating-linear-gradient(#d3d3d3 0,#d3d3d3 1px,transparent 1px,transparent 2.5px)"></div>
<div class="a" style="left:1367.0px;top:214.5px;width:1px;height:747.3000000000001px;background:repeating-linear-gradient(#d3d3d3 0,#d3d3d3 1px,transparent 1px,transparent 2.5px)"></div>
<div class="a" style="left:1399.5px;top:214.5px;width:1px;height:747.3000000000001px;background:repeating-linear-gradient(#d3d3d3 0,#d3d3d3 1px,transparent 1px,transparent 2.5px)"></div>
<div class="a" style="left:1432.0px;top:214.5px;width:1px;height:747.3000000000001px;background:repeating-linear-gradient(#d3d3d3 0,#d3d3d3 1px,transparent 1px,transparent 2.5px)"></div>
<div class="a" style="left:1465.1px;top:214.5px;width:1px;height:747.3000000000001px;background:repeating-linear-gradient(#d3d3d3 0,#d3d3d3 1px,transparent 1px,transparent 2.5px)"></div>
<div class="a" style="left:1497.9px;top:214.5px;width:1px;height:747.3000000000001px;background:repeating-linear-gradient(#d3d3d3 0,#d3d3d3 1px,transparent 1px,transparent 2.5px)"></div>
<div class="a" style="left:1561.9px;top:214.5px;width:1px;height:747.3000000000001px;background:repeating-linear-gradient(#d3d3d3 0,#d3d3d3 1px,transparent 1px,transparent 2.5px)"></div>
<div class="a" style="left:1715.1px;top:214.5px;width:1px;height:747.3000000000001px;background:repeating-linear-gradient(#d3d3d3 0,#d3d3d3 1px,transparent 1px,transparent 2.5px)"></div>
<div class="a" style="left:1763.1px;top:214.5px;width:1px;height:747.3000000000001px;background:repeating-linear-gradient(#d3d3d3 0,#d3d3d3 1px,transparent 1px,transparent 2.5px)"></div>
<div class="a" style="left:1811.3px;top:214.5px;width:1px;height:747.3000000000001px;background:repeating-linear-gradient(#d3d3d3 0,#d3d3d3 1px,transparent 1px,transparent 2.5px)"></div>
<div class="hd" style="left:357px;top:196.5px;width:33px"><span>T</span></div>
<div class="hd" style="left:390px;top:196.5px;width:56.5px"><span>Uni. Log.</span></div>
<div class="hd" style="left:446.5px;top:196.5px;width:72.5px"><span>Gestionnaire</span></div>
<div class="hd" style="left:519px;top:196.5px;width:72.5px"><span>Evènement</span></div>
<div class="hd" style="left:591.5px;top:196.5px;width:71.79999999999995px"><span>Date Evt.</span></div>
<div class="hd" style="left:663.3px;top:196.5px;width:56.700000000000045px"><span>Date Exp.</span></div>
<div class="hd" style="left:720px;top:196.5px;width:58px"><span>Date Liv.</span></div>
<div class="hd" style="left:778px;top:196.5px;width:55.5px"><span>Qté.Lan.</span></div>
<div class="hd" style="left:833.5px;top:196.5px;width:49.5px"><span>Qté.Liv.</span></div>
<div class="hd" style="left:883px;top:196.5px;width:56.5px"><span>Qté.Rec.</span></div>
<div class="hd" style="left:939.5px;top:196.5px;width:56.5px"><span>Qté.Fac.</span></div>
<div class="hd" style="left:996px;top:196.5px;width:56px"><span>Qté.Cde.</span></div>
<div class="hd" style="left:1052px;top:196.5px;width:96.5px"><span>Bon Prépa.</span></div>
<div class="hd" style="left:1148.5px;top:196.5px;width:96.0px"><span>Bon Condi.</span></div>
<div class="hd" style="left:1244.5px;top:196.5px;width:57.0px"><span>Bon Liv.</span></div>
<div class="hd" style="left:1301.5px;top:196.5px;width:32.5px"><span>A</span></div>
<div class="hd" style="left:1334px;top:196.5px;width:33.5px"><span>Ctr ?</span></div>
<div class="hd" style="left:1367.5px;top:196.5px;width:32.5px"><span>V</span></div>
<div class="hd" style="left:1400px;top:196.5px;width:32.5px"><span>NF</span></div>
<div class="hd" style="left:1432.5px;top:196.5px;width:33.09999999999991px"><span>F</span></div>
<div class="hd" style="left:1465.6px;top:196.5px;width:32.80000000000018px"><span>C</span></div>
<div class="hd" style="left:1498.4px;top:196.5px;width:64.0px"><span>Commande</span></div>
<div class="hd" style="left:1562.4px;top:196.5px;width:153.19999999999982px"><span>Ligne</span></div>
<div class="hd" style="left:1715.6px;top:196.5px;width:48.0px"><span>Réseau</span></div>
<div class="hd" style="left:1763.6px;top:196.5px;width:48.200000000000045px"><span>Client</span></div>
<div class="hd" style="left:1811.8px;top:196.5px;width:160.20000000000005px"><span>Nom</span></div>
<div class="a" style="left:324px;top:196.5px;width:33px;height:18px;background:linear-gradient(#b6c8df,#a9bdd8);border-right:1px solid #c7d3e2"></div>
<svg class="a" style="left:345px;top:202px" width="9" height="9"><path d="M9 0V9H0Z" fill="#e6eef8"/></svg>
<div class="a" style="left:357px;top:196.5px;width:33px;height:18px;background:linear-gradient(#f8d58e,#f4bf62);border-right:1px solid #e3b060"></div>
<div class="a" style="left:357px;top:197.5px;width:33px;text-align:center;font-size:12px;color:#5a3a10;line-height:17px"><span style="display:inline-block;transform:scaleX(.87)">T</span></div>
<div class="a" style="left:324px;top:214.5px;width:33px;height:15.9px;background:#f6c56f"></div>
<div class="row" style="left:324px;top:214.50px"><div class="cl L" style="left:125.5px"><span>U1</span></div><div class="cl L" style="left:198.0px"><span>U1</span></div><div class="cl Cc" style="left:267.5px;width:71.8px"><span>10/07/2023</span></div><div class="cl R" style="left:454.0px;width:54.0px"><span>4,000</span></div><div class="cl R" style="left:509.5px;width:48.0px"><span>2,000</span></div><div class="cl R" style="left:559.0px;width:55.0px"><span>0,000</span></div><div class="cl R" style="left:615.5px;width:55.0px"><span>0,000</span></div><div class="cl R" style="left:672.0px;width:54.5px"><span>4,000</span></div><div class="cl L" style="left:731.0px"><span>U14999</span></div><div class="cl L" style="left:827.5px"><span>U19999</span></div><div class="cl L" style="left:1177.4px"><span>*A</span></div><div class="cl L" style="left:1241.4px"><span>A_U1_0000001</span></div><div class="cl L" style="left:1393.6px"><span>0</span></div><div class="cl L" style="left:1442.6px"><span>000125</span></div><div class="cl L" style="left:1491.8px"><span>MENUISERIE J</span></div><div class="cb" style="left:43.0px;top:1.5px"></div><div class="cb" style="left:987.2px;top:1.5px"></div><div class="cb" style="left:1020.2px;top:1.5px"></div><div class="cb" style="left:1053.2px;top:1.5px"></div><div class="cb k" style="left:1085.8px;top:1.5px"></div><div class="cb" style="left:1118.5px;top:1.5px"></div><div class="cb" style="left:1151.5px;top:1.5px"></div></div>
<div class="row" style="left:324px;top:230.40px"><div class="cl L" style="left:125.5px"><span>U1</span></div><div class="cl L" style="left:198.0px"><span>U1</span></div><div class="cl Cc" style="left:267.5px;width:71.8px"><span>10/07/2023</span></div><div class="cl R" style="left:454.0px;width:54.0px"><span>2,000</span></div><div class="cl R" style="left:509.5px;width:48.0px"><span>0,000</span></div><div class="cl R" style="left:559.0px;width:55.0px"><span>0,000</span></div><div class="cl R" style="left:615.5px;width:55.0px"><span>0,000</span></div><div class="cl R" style="left:672.0px;width:54.5px"><span>2,000</span></div><div class="cl L" style="left:731.0px"><span>U14999</span></div><div class="cl L" style="left:827.5px"><span>U19999</span></div><div class="cl L" style="left:1177.4px"><span>*A</span></div><div class="cl L" style="left:1241.4px"><span>A_U1_0000002</span></div><div class="cl L" style="left:1393.6px"><span>0</span></div><div class="cl L" style="left:1442.6px"><span>000052</span></div><div class="cl L" style="left:1491.8px"><span>MENUISERIE J</span></div><div class="cb" style="left:43.0px;top:1.5px"></div><div class="cb" style="left:987.2px;top:1.5px"></div><div class="cb" style="left:1020.2px;top:1.5px"></div><div class="cb" style="left:1053.2px;top:1.5px"></div><div class="cb k" style="left:1085.8px;top:1.5px"></div><div class="cb" style="left:1118.5px;top:1.5px"></div><div class="cb" style="left:1151.5px;top:1.5px"></div></div>
<div class="row" style="left:324px;top:246.30px"><div class="cl L" style="left:125.5px"><span>U1</span></div><div class="cl L" style="left:198.0px"><span>U1</span></div><div class="cl Cc" style="left:267.5px;width:71.8px"><span>10/07/2023</span></div><div class="cl R" style="left:454.0px;width:54.0px"><span>1,000</span></div><div class="cl R" style="left:509.5px;width:48.0px"><span>0,000</span></div><div class="cl R" style="left:559.0px;width:55.0px"><span>0,000</span></div><div class="cl R" style="left:615.5px;width:55.0px"><span>0,000</span></div><div class="cl R" style="left:672.0px;width:54.5px"><span>1,000</span></div><div class="cl L" style="left:731.0px"><span>U14999</span></div><div class="cl L" style="left:827.5px"><span>U19999</span></div><div class="cl L" style="left:1177.4px"><span>*A</span></div><div class="cl L" style="left:1241.4px"><span>A_U1_0000003</span></div><div class="cl L" style="left:1393.6px"><span>0</span></div><div class="cl L" style="left:1442.6px"><span>000052</span></div><div class="cl L" style="left:1491.8px"><span>MENUISERIE J</span></div><div class="cb" style="left:43.0px;top:1.5px"></div><div class="cb" style="left:987.2px;top:1.5px"></div><div class="cb" style="left:1020.2px;top:1.5px"></div><div class="cb" style="left:1053.2px;top:1.5px"></div><div class="cb k" style="left:1085.8px;top:1.5px"></div><div class="cb" style="left:1118.5px;top:1.5px"></div><div class="cb" style="left:1151.5px;top:1.5px"></div></div>
<div class="row" style="left:324px;top:262.20px"><div class="cl L" style="left:125.5px"><span>U1</span></div><div class="cl L" style="left:198.0px"><span>U1</span></div><div class="cl Cc" style="left:267.5px;width:71.8px"><span>10/07/2023</span></div><div class="cl R" style="left:454.0px;width:54.0px"><span>2,000</span></div><div class="cl R" style="left:509.5px;width:48.0px"><span>1,000</span></div><div class="cl R" style="left:559.0px;width:55.0px"><span>0,000</span></div><div class="cl R" style="left:615.5px;width:55.0px"><span>0,000</span></div><div class="cl R" style="left:672.0px;width:54.5px"><span>2,000</span></div><div class="cl L" style="left:731.0px"><span>U14999</span></div><div class="cl L" style="left:827.5px"><span>U19999</span></div><div class="cl L" style="left:1177.4px"><span>*A</span></div><div class="cl L" style="left:1241.4px"><span>A_U1_0000004</span></div><div class="cl L" style="left:1393.6px"><span>0</span></div><div class="cl L" style="left:1442.6px"><span>000052</span></div><div class="cl L" style="left:1491.8px"><span>MENUISERIE J</span></div><div class="cb" style="left:43.0px;top:1.5px"></div><div class="cb" style="left:987.2px;top:1.5px"></div><div class="cb" style="left:1020.2px;top:1.5px"></div><div class="cb" style="left:1053.2px;top:1.5px"></div><div class="cb k" style="left:1085.8px;top:1.5px"></div><div class="cb" style="left:1118.5px;top:1.5px"></div><div class="cb" style="left:1151.5px;top:1.5px"></div></div>
<div class="row" style="left:324px;top:278.10px"><div class="cl L" style="left:125.5px"><span>U1</span></div><div class="cl L" style="left:198.0px"><span>U1</span></div><div class="cl Cc" style="left:267.5px;width:71.8px"><span>10/07/2023</span></div><div class="cl R" style="left:454.0px;width:54.0px"><span>1,000</span></div><div class="cl R" style="left:509.5px;width:48.0px"><span>0,000</span></div><div class="cl R" style="left:559.0px;width:55.0px"><span>0,000</span></div><div class="cl R" style="left:615.5px;width:55.0px"><span>0,000</span></div><div class="cl R" style="left:672.0px;width:54.5px"><span>1,000</span></div><div class="cl L" style="left:731.0px"><span>U14999</span></div><div class="cl L" style="left:827.5px"><span>U19999</span></div><div class="cl L" style="left:1177.4px"><span>*A</span></div><div class="cl L" style="left:1241.4px"><span>A_U1_0000005</span></div><div class="cl L" style="left:1393.6px"><span>0</span></div><div class="cl L" style="left:1442.6px"><span>000052</span></div><div class="cl L" style="left:1491.8px"><span>MENUISERIE J</span></div><div class="cb" style="left:43.0px;top:1.5px"></div><div class="cb" style="left:987.2px;top:1.5px"></div><div class="cb" style="left:1020.2px;top:1.5px"></div><div class="cb" style="left:1053.2px;top:1.5px"></div><div class="cb k" style="left:1085.8px;top:1.5px"></div><div class="cb" style="left:1118.5px;top:1.5px"></div><div class="cb" style="left:1151.5px;top:1.5px"></div></div>
<div class="row" style="left:324px;top:294.00px"><div class="cl L" style="left:125.5px"><span>U1</span></div><div class="cl L" style="left:198.0px"><span>2307130005</span></div><div class="cl Cc" style="left:267.5px;width:71.8px"><span>10/07/2023</span></div><div class="cl R" style="left:454.0px;width:54.0px"><span>1,000</span></div><div class="cl R" style="left:509.5px;width:48.0px"><span>1,000</span></div><div class="cl R" style="left:559.0px;width:55.0px"><span>0,000</span></div><div class="cl R" style="left:615.5px;width:55.0px"><span>0,000</span></div><div class="cl R" style="left:672.0px;width:54.5px"><span>1,000</span></div><div class="cl L" style="left:731.0px"><span>23071300054999</span></div><div class="cl L" style="left:827.5px"><span>23071300059999</span></div><div class="cl L" style="left:923.5px"><span>1940005</span></div><div class="cl L" style="left:1177.4px"><span>*A</span></div><div class="cl L" style="left:1241.4px"><span>A_U1_0000005</span></div><div class="cl L" style="left:1393.6px"><span>0</span></div><div class="cl L" style="left:1442.6px"><span>000052</span></div><div class="cl L" style="left:1491.8px"><span>MENUISERIE J</span></div><div class="cb" style="left:43.0px;top:1.5px"></div><div class="cb" style="left:987.2px;top:1.5px"></div><div class="cb" style="left:1020.2px;top:1.5px"></div><div class="cb" style="left:1053.2px;top:1.5px"></div><div class="cb k" style="left:1085.8px;top:1.5px"></div><div class="cb" style="left:1118.5px;top:1.5px"></div><div class="cb" style="left:1151.5px;top:1.5px"></div></div>
<div class="row" style="left:324px;top:309.90px"><div class="cl L" style="left:125.5px"><span>U1</span></div><div class="cl L" style="left:198.0px"><span>U1</span></div><div class="cl Cc" style="left:267.5px;width:71.8px"><span>10/07/2023</span></div><div class="cl R" style="left:454.0px;width:54.0px"><span>4,000</span></div><div class="cl R" style="left:509.5px;width:48.0px"><span>0,000</span></div><div class="cl R" style="left:559.0px;width:55.0px"><span>0,000</span></div><div class="cl R" style="left:615.5px;width:55.0px"><span>0,000</span></div><div class="cl R" style="left:672.0px;width:54.5px"><span>4,000</span></div><div class="cl L" style="left:731.0px"><span>U14999</span></div><div class="cl L" style="left:827.5px"><span>U19999</span></div><div class="cl L" style="left:1177.4px"><span>*A</span></div><div class="cl L" style="left:1241.4px"><span>A_U1_0000006</span></div><div class="cl L" style="left:1393.6px"><span>0</span></div><div class="cl L" style="left:1442.6px"><span>000052</span></div><div class="cl L" style="left:1491.8px"><span>MENUISERIE J</span></div><div class="cb" style="left:43.0px;top:1.5px"></div><div class="cb" style="left:987.2px;top:1.5px"></div><div class="cb" style="left:1020.2px;top:1.5px"></div><div class="cb" style="left:1053.2px;top:1.5px"></div><div class="cb k" style="left:1085.8px;top:1.5px"></div><div class="cb" style="left:1118.5px;top:1.5px"></div><div class="cb" style="left:1151.5px;top:1.5px"></div></div>
<div class="row" style="left:324px;top:325.80px"><div class="cl L" style="left:125.5px"><span>U1</span></div><div class="cl L" style="left:198.0px"><span>2307130005</span></div><div class="cl Cc" style="left:267.5px;width:71.8px"><span>10/07/2023</span></div><div class="cl R" style="left:454.0px;width:54.0px"><span>3,000</span></div><div class="cl R" style="left:509.5px;width:48.0px"><span>2,000</span></div><div class="cl R" style="left:559.0px;width:55.0px"><span>0,000</span></div><div class="cl R" style="left:615.5px;width:55.0px"><span>0,000</span></div><div class="cl R" style="left:672.0px;width:54.5px"><span>3,000</span></div><div class="cl L" style="left:731.0px"><span>23071300054999</span></div><div class="cl L" style="left:827.5px"><span>23071300059999</span></div><div class="cl L" style="left:923.5px"><span>1940005</span></div><div class="cl L" style="left:1177.4px"><span>*A</span></div><div class="cl L" style="left:1241.4px"><span>A_U1_0000006</span></div><div class="cl L" style="left:1393.6px"><span>0</span></div><div class="cl L" style="left:1442.6px"><span>000052</span></div><div class="cl L" style="left:1491.8px"><span>MENUISERIE J</span></div><div class="cb" style="left:43.0px;top:1.5px"></div><div class="cb" style="left:987.2px;top:1.5px"></div><div class="cb" style="left:1020.2px;top:1.5px"></div><div class="cb" style="left:1053.2px;top:1.5px"></div><div class="cb k" style="left:1085.8px;top:1.5px"></div><div class="cb" style="left:1118.5px;top:1.5px"></div><div class="cb" style="left:1151.5px;top:1.5px"></div></div>
<div class="row" style="left:324px;top:341.70px"><div class="cl L" style="left:125.5px"><span>U1</span></div><div class="cl L" style="left:198.0px"><span>U1</span></div><div class="cl Cc" style="left:267.5px;width:71.8px"><span>10/07/2023</span></div><div class="cl R" style="left:454.0px;width:54.0px"><span>2,000</span></div><div class="cl R" style="left:509.5px;width:48.0px"><span>2,000</span></div><div class="cl R" style="left:559.0px;width:55.0px"><span>0,000</span></div><div class="cl R" style="left:615.5px;width:55.0px"><span>0,000</span></div><div class="cl R" style="left:672.0px;width:54.5px"><span>2,000</span></div><div class="cl L" style="left:731.0px"><span>U14999</span></div><div class="cl L" style="left:827.5px"><span>U19999</span></div><div class="cl L" style="left:1177.4px"><span>*A</span></div><div class="cl L" style="left:1241.4px"><span>A_U1_0000007</span></div><div class="cl L" style="left:1393.6px"><span>0</span></div><div class="cl L" style="left:1442.6px"><span>000052</span></div><div class="cl L" style="left:1491.8px"><span>MENUISERIE J</span></div><div class="cb" style="left:43.0px;top:1.5px"></div><div class="cb" style="left:987.2px;top:1.5px"></div><div class="cb" style="left:1020.2px;top:1.5px"></div><div class="cb" style="left:1053.2px;top:1.5px"></div><div class="cb k" style="left:1085.8px;top:1.5px"></div><div class="cb" style="left:1118.5px;top:1.5px"></div><div class="cb" style="left:1151.5px;top:1.5px"></div></div>
<div class="row" style="left:324px;top:357.60px"><div class="cl L" style="left:125.5px"><span>U1</span></div><div class="cl L" style="left:198.0px"><span>U1</span></div><div class="cl Cc" style="left:267.5px;width:71.8px"><span>10/07/2023</span></div><div class="cl R" style="left:454.0px;width:54.0px"><span>1,000</span></div><div class="cl R" style="left:509.5px;width:48.0px"><span>0,000</span></div><div class="cl R" style="left:559.0px;width:55.0px"><span>0,000</span></div><div class="cl R" style="left:615.5px;width:55.0px"><span>0,000</span></div><div class="cl R" style="left:672.0px;width:54.5px"><span>1,000</span></div><div class="cl L" style="left:731.0px"><span>U14999</span></div><div class="cl L" style="left:827.5px"><span>U19999</span></div><div class="cl L" style="left:1177.4px"><span>*A</span></div><div class="cl L" style="left:1241.4px"><span>A_U1_0000008</span></div><div class="cl L" style="left:1393.6px"><span>0</span></div><div class="cl L" style="left:1442.6px"><span>000052</span></div><div class="cl L" style="left:1491.8px"><span>MENUISERIE J</span></div><div class="cb" style="left:43.0px;top:1.5px"></div><div class="cb" style="left:987.2px;top:1.5px"></div><div class="cb" style="left:1020.2px;top:1.5px"></div><div class="cb" style="left:1053.2px;top:1.5px"></div><div class="cb k" style="left:1085.8px;top:1.5px"></div><div class="cb" style="left:1118.5px;top:1.5px"></div><div class="cb" style="left:1151.5px;top:1.5px"></div></div>
<div class="row" style="left:324px;top:373.50px"><div class="cl L" style="left:125.5px"><span>U1</span></div><div class="cl L" style="left:198.0px"><span>U1</span></div><div class="cl Cc" style="left:267.5px;width:71.8px"><span>10/07/2023</span></div><div class="cl R" style="left:454.0px;width:54.0px"><span>1,000</span></div><div class="cl R" style="left:509.5px;width:48.0px"><span>1,000</span></div><div class="cl R" style="left:559.0px;width:55.0px"><span>0,000</span></div><div class="cl R" style="left:615.5px;width:55.0px"><span>0,000</span></div><div class="cl R" style="left:672.0px;width:54.5px"><span>1,000</span></div><div class="cl L" style="left:731.0px"><span>U14999</span></div><div class="cl L" style="left:827.5px"><span>U19999</span></div><div class="cl L" style="left:1177.4px"><span>*A</span></div><div class="cl L" style="left:1241.4px"><span>A_U1_0000010</span></div><div class="cl L" style="left:1393.6px"><span>0</span></div><div class="cl L" style="left:1442.6px"><span>000052</span></div><div class="cl L" style="left:1491.8px"><span>MENUISERIE J</span></div><div class="cb" style="left:43.0px;top:1.5px"></div><div class="cb" style="left:987.2px;top:1.5px"></div><div class="cb" style="left:1020.2px;top:1.5px"></div><div class="cb" style="left:1053.2px;top:1.5px"></div><div class="cb k" style="left:1085.8px;top:1.5px"></div><div class="cb" style="left:1118.5px;top:1.5px"></div><div class="cb" style="left:1151.5px;top:1.5px"></div></div>
<div class="row" style="left:324px;top:389.40px"><div class="cl L" style="left:125.5px"><span>U1</span></div><div class="cl L" style="left:198.0px"><span>U1</span></div><div class="cl Cc" style="left:267.5px;width:71.8px"><span>10/07/2023</span></div><div class="cl R" style="left:454.0px;width:54.0px"><span>1,000</span></div><div class="cl R" style="left:509.5px;width:48.0px"><span>0,000</span></div><div class="cl R" style="left:559.0px;width:55.0px"><span>0,000</span></div><div class="cl R" style="left:615.5px;width:55.0px"><span>0,000</span></div><div class="cl R" style="left:672.0px;width:54.5px"><span>1,000</span></div><div class="cl L" style="left:731.0px"><span>U14999</span></div><div class="cl L" style="left:827.5px"><span>U19999</span></div><div class="cl L" style="left:1177.4px"><span>*A</span></div><div class="cl L" style="left:1241.4px"><span>A_U1_0000011</span></div><div class="cl L" style="left:1393.6px"><span>0</span></div><div class="cl L" style="left:1442.6px"><span>000052</span></div><div class="cl L" style="left:1491.8px"><span>MENUISERIE J</span></div><div class="cb" style="left:43.0px;top:1.5px"></div><div class="cb" style="left:987.2px;top:1.5px"></div><div class="cb" style="left:1020.2px;top:1.5px"></div><div class="cb" style="left:1053.2px;top:1.5px"></div><div class="cb k" style="left:1085.8px;top:1.5px"></div><div class="cb" style="left:1118.5px;top:1.5px"></div><div class="cb" style="left:1151.5px;top:1.5px"></div></div>
<div class="row" style="left:324px;top:405.30px"><div class="cl L" style="left:125.5px"><span>U1</span></div><div class="cl L" style="left:198.0px"><span>U1</span></div><div class="cl Cc" style="left:267.5px;width:71.8px"><span>10/07/2023</span></div><div class="cl R" style="left:454.0px;width:54.0px"><span>8,000</span></div><div class="cl R" style="left:509.5px;width:48.0px"><span>3,000</span></div><div class="cl R" style="left:559.0px;width:55.0px"><span>0,000</span></div><div class="cl R" style="left:615.5px;width:55.0px"><span>0,000</span></div><div class="cl R" style="left:672.0px;width:54.5px"><span>8,000</span></div><div class="cl L" style="left:731.0px"><span>U14999</span></div><div class="cl L" style="left:827.5px"><span>U19999</span></div><div class="cl L" style="left:1177.4px"><span>*A</span></div><div class="cl L" style="left:1241.4px"><span>A_U1_0000012</span></div><div class="cl L" style="left:1393.6px"><span>0</span></div><div class="cl L" style="left:1442.6px"><span>000052</span></div><div class="cl L" style="left:1491.8px"><span>MENUISERIE J</span></div><div class="cb" style="left:43.0px;top:1.5px"></div><div class="cb" style="left:987.2px;top:1.5px"></div><div class="cb" style="left:1020.2px;top:1.5px"></div><div class="cb" style="left:1053.2px;top:1.5px"></div><div class="cb k" style="left:1085.8px;top:1.5px"></div><div class="cb" style="left:1118.5px;top:1.5px"></div><div class="cb" style="left:1151.5px;top:1.5px"></div></div>
<div class="row" style="left:324px;top:421.20px"><div class="cl L" style="left:125.5px"><span>U1</span></div><div class="cl L" style="left:198.0px"><span>U1</span></div><div class="cl Cc" style="left:267.5px;width:71.8px"><span>10/07/2023</span></div><div class="cl R" style="left:454.0px;width:54.0px"><span>7,000</span></div><div class="cl R" style="left:509.5px;width:48.0px"><span>1,000</span></div><div class="cl R" style="left:559.0px;width:55.0px"><span>0,000</span></div><div class="cl R" style="left:615.5px;width:55.0px"><span>0,000</span></div><div class="cl R" style="left:672.0px;width:54.5px"><span>7,000</span></div><div class="cl L" style="left:731.0px"><span>U14999</span></div><div class="cl L" style="left:827.5px"><span>U19999</span></div><div class="cl L" style="left:1177.4px"><span>*A</span></div><div class="cl L" style="left:1241.4px"><span>A_U1_0000013</span></div><div class="cl L" style="left:1393.6px"><span>0</span></div><div class="cl L" style="left:1442.6px"><span>000052</span></div><div class="cl L" style="left:1491.8px"><span>MENUISERIE J</span></div><div class="cb" style="left:43.0px;top:1.5px"></div><div class="cb" style="left:987.2px;top:1.5px"></div><div class="cb" style="left:1020.2px;top:1.5px"></div><div class="cb" style="left:1053.2px;top:1.5px"></div><div class="cb k" style="left:1085.8px;top:1.5px"></div><div class="cb" style="left:1118.5px;top:1.5px"></div><div class="cb" style="left:1151.5px;top:1.5px"></div></div>
<div class="row" style="left:324px;top:437.10px"><div class="cl L" style="left:125.5px"><span>U1</span></div><div class="cl L" style="left:198.0px"><span>2308250001</span></div><div class="cl Cc" style="left:267.5px;width:71.8px"><span>25/08/2023</span></div><div class="cl R" style="left:454.0px;width:54.0px"><span>2,000</span></div><div class="cl R" style="left:509.5px;width:48.0px"><span>0,000</span></div><div class="cl R" style="left:559.0px;width:55.0px"><span>0,000</span></div><div class="cl R" style="left:615.5px;width:55.0px"><span>0,000</span></div><div class="cl R" style="left:672.0px;width:54.5px"><span>2,000</span></div><div class="cl L" style="left:731.0px"><span>23082500014999</span></div><div class="cl L" style="left:827.5px"><span>23082500019999</span></div><div class="cl L" style="left:923.5px"><span>2410001</span></div><div class="cl L" style="left:1177.4px"><span>*A</span></div><div class="cl L" style="left:1241.4px"><span>A_U1_0000013</span></div><div class="cl L" style="left:1393.6px"><span>0</span></div><div class="cl L" style="left:1442.6px"><span>000052</span></div><div class="cl L" style="left:1491.8px"><span>MENUISERIE J</span></div><div class="cb" style="left:43.0px;top:1.5px"></div><div class="cb" style="left:987.2px;top:1.5px"></div><div class="cb" style="left:1020.2px;top:1.5px"></div><div class="cb" style="left:1053.2px;top:1.5px"></div><div class="cb k" style="left:1085.8px;top:1.5px"></div><div class="cb" style="left:1118.5px;top:1.5px"></div><div class="cb" style="left:1151.5px;top:1.5px"></div></div>
<div class="row" style="left:324px;top:453.00px"><div class="cl L" style="left:125.5px"><span>U1</span></div><div class="cl L" style="left:198.0px"><span>U1</span></div><div class="cl Cc" style="left:267.5px;width:71.8px"><span>10/07/2023</span></div><div class="cl R" style="left:454.0px;width:54.0px"><span>2,000</span></div><div class="cl R" style="left:509.5px;width:48.0px"><span>0,000</span></div><div class="cl R" style="left:559.0px;width:55.0px"><span>0,000</span></div><div class="cl R" style="left:615.5px;width:55.0px"><span>0,000</span></div><div class="cl R" style="left:672.0px;width:54.5px"><span>2,000</span></div><div class="cl L" style="left:731.0px"><span>U14999</span></div><div class="cl L" style="left:827.5px"><span>U19999</span></div><div class="cl L" style="left:1177.4px"><span>*A</span></div><div class="cl L" style="left:1241.4px"><span>A_U1_0000014</span></div><div class="cl L" style="left:1393.6px"><span>0</span></div><div class="cl L" style="left:1442.6px"><span>000052</span></div><div class="cl L" style="left:1491.8px"><span>MENUISERIE J</span></div><div class="cb" style="left:43.0px;top:1.5px"></div><div class="cb" style="left:987.2px;top:1.5px"></div><div class="cb" style="left:1020.2px;top:1.5px"></div><div class="cb" style="left:1053.2px;top:1.5px"></div><div class="cb k" style="left:1085.8px;top:1.5px"></div><div class="cb" style="left:1118.5px;top:1.5px"></div><div class="cb" style="left:1151.5px;top:1.5px"></div></div>
<div class="row" style="left:324px;top:468.90px"><div class="cl L" style="left:125.5px"><span>U1</span></div><div class="cl L" style="left:198.0px"><span>U1</span></div><div class="cl Cc" style="left:267.5px;width:71.8px"><span>10/07/2023</span></div><div class="cl R" style="left:454.0px;width:54.0px"><span>1,000</span></div><div class="cl R" style="left:509.5px;width:48.0px"><span>0,000</span></div><div class="cl R" style="left:559.0px;width:55.0px"><span>0,000</span></div><div class="cl R" style="left:615.5px;width:55.0px"><span>0,000</span></div><div class="cl R" style="left:672.0px;width:54.5px"><span>1,000</span></div><div class="cl L" style="left:731.0px"><span>U14999</span></div><div class="cl L" style="left:827.5px"><span>U19999</span></div><div class="cl L" style="left:1177.4px"><span>*A</span></div><div class="cl L" style="left:1241.4px"><span>A_U1_0000015</span></div><div class="cl L" style="left:1393.6px"><span>0</span></div><div class="cl L" style="left:1442.6px"><span>000052</span></div><div class="cl L" style="left:1491.8px"><span>MENUISERIE J</span></div><div class="cb" style="left:43.0px;top:1.5px"></div><div class="cb" style="left:987.2px;top:1.5px"></div><div class="cb" style="left:1020.2px;top:1.5px"></div><div class="cb" style="left:1053.2px;top:1.5px"></div><div class="cb k" style="left:1085.8px;top:1.5px"></div><div class="cb" style="left:1118.5px;top:1.5px"></div><div class="cb" style="left:1151.5px;top:1.5px"></div></div>
<div class="row" style="left:324px;top:484.80px"><div class="cl L" style="left:125.5px"><span>U1</span></div><div class="cl L" style="left:198.0px"><span>U1</span></div><div class="cl Cc" style="left:267.5px;width:71.8px"><span>10/07/2023</span></div><div class="cl R" style="left:454.0px;width:54.0px"><span>7,000</span></div><div class="cl R" style="left:509.5px;width:48.0px"><span>5,000</span></div><div class="cl R" style="left:559.0px;width:55.0px"><span>0,000</span></div><div class="cl R" style="left:615.5px;width:55.0px"><span>0,000</span></div><div class="cl R" style="left:672.0px;width:54.5px"><span>7,000</span></div><div class="cl L" style="left:731.0px"><span>U14999</span></div><div class="cl L" style="left:827.5px"><span>U19999</span></div><div class="cl L" style="left:1177.4px"><span>*A</span></div><div class="cl L" style="left:1241.4px"><span>A_U1_0000016</span></div><div class="cl L" style="left:1393.6px"><span>0</span></div><div class="cl L" style="left:1442.6px"><span>000052</span></div><div class="cl L" style="left:1491.8px"><span>MENUISERIE J</span></div><div class="cb" style="left:43.0px;top:1.5px"></div><div class="cb" style="left:987.2px;top:1.5px"></div><div class="cb" style="left:1020.2px;top:1.5px"></div><div class="cb" style="left:1053.2px;top:1.5px"></div><div class="cb k" style="left:1085.8px;top:1.5px"></div><div class="cb" style="left:1118.5px;top:1.5px"></div><div class="cb" style="left:1151.5px;top:1.5px"></div></div>
<div class="row" style="left:324px;top:500.70px"><div class="cl L" style="left:125.5px"><span>U1</span></div><div class="cl L" style="left:198.0px"><span>2308250001</span></div><div class="cl Cc" style="left:267.5px;width:71.8px"><span>25/08/2023</span></div><div class="cl R" style="left:454.0px;width:54.0px"><span>1,000</span></div><div class="cl R" style="left:509.5px;width:48.0px"><span>0,000</span></div><div class="cl R" style="left:559.0px;width:55.0px"><span>0,000</span></div><div class="cl R" style="left:615.5px;width:55.0px"><span>0,000</span></div><div class="cl R" style="left:672.0px;width:54.5px"><span>1,000</span></div><div class="cl L" style="left:731.0px"><span>23082500014999</span></div><div class="cl L" style="left:827.5px"><span>23082500019999</span></div><div class="cl L" style="left:923.5px"><span>2440008</span></div><div class="cl L" style="left:1177.4px"><span>*A</span></div><div class="cl L" style="left:1241.4px"><span>A_U1_0000016</span></div><div class="cl L" style="left:1393.6px"><span>0</span></div><div class="cl L" style="left:1442.6px"><span>000052</span></div><div class="cl L" style="left:1491.8px"><span>MENUISERIE J</span></div><div class="cb" style="left:43.0px;top:1.5px"></div><div class="cb" style="left:987.2px;top:1.5px"></div><div class="cb" style="left:1020.2px;top:1.5px"></div><div class="cb" style="left:1053.2px;top:1.5px"></div><div class="cb k" style="left:1085.8px;top:1.5px"></div><div class="cb" style="left:1118.5px;top:1.5px"></div><div class="cb" style="left:1151.5px;top:1.5px"></div></div>
<div class="row" style="left:324px;top:516.60px"><div class="cl L" style="left:125.5px"><span>U1</span></div><div class="cl L" style="left:198.0px"><span>U1</span></div><div class="cl Cc" style="left:267.5px;width:71.8px"><span>10/07/2023</span></div><div class="cl R" style="left:454.0px;width:54.0px"><span>5,000</span></div><div class="cl R" style="left:509.5px;width:48.0px"><span>1,000</span></div><div class="cl R" style="left:559.0px;width:55.0px"><span>0,000</span></div><div class="cl R" style="left:615.5px;width:55.0px"><span>0,000</span></div><div class="cl R" style="left:672.0px;width:54.5px"><span>5,000</span></div><div class="cl L" style="left:731.0px"><span>U14999</span></div><div class="cl L" style="left:827.5px"><span>U19999</span></div><div class="cl L" style="left:1177.4px"><span>*A</span></div><div class="cl L" style="left:1241.4px"><span>A_U1_0000017</span></div><div class="cl L" style="left:1393.6px"><span>0</span></div><div class="cl L" style="left:1442.6px"><span>000052</span></div><div class="cl L" style="left:1491.8px"><span>MENUISERIE J</span></div><div class="cb" style="left:43.0px;top:1.5px"></div><div class="cb" style="left:987.2px;top:1.5px"></div><div class="cb" style="left:1020.2px;top:1.5px"></div><div class="cb" style="left:1053.2px;top:1.5px"></div><div class="cb k" style="left:1085.8px;top:1.5px"></div><div class="cb" style="left:1118.5px;top:1.5px"></div><div class="cb" style="left:1151.5px;top:1.5px"></div></div>
<div class="row" style="left:324px;top:532.50px"><div class="cl L" style="left:125.5px"><span>U1</span></div><div class="cl L" style="left:198.0px"><span>2308250001</span></div><div class="cl Cc" style="left:267.5px;width:71.8px"><span>25/08/2023</span></div><div class="cl R" style="left:454.0px;width:54.0px"><span>2,000</span></div><div class="cl R" style="left:509.5px;width:48.0px"><span>0,000</span></div><div class="cl R" style="left:559.0px;width:55.0px"><span>0,000</span></div><div class="cl R" style="left:615.5px;width:55.0px"><span>0,000</span></div><div class="cl R" style="left:672.0px;width:54.5px"><span>2,000</span></div><div class="cl L" style="left:731.0px"><span>23082500014999</span></div><div class="cl L" style="left:827.5px"><span>23082500019999</span></div><div class="cl L" style="left:923.5px"><span>2410001</span></div><div class="cl L" style="left:1177.4px"><span>*A</span></div><div class="cl L" style="left:1241.4px"><span>A_U1_0000017</span></div><div class="cl L" style="left:1393.6px"><span>0</span></div><div class="cl L" style="left:1442.6px"><span>000052</span></div><div class="cl L" style="left:1491.8px"><span>MENUISERIE J</span></div><div class="cb" style="left:43.0px;top:1.5px"></div><div class="cb" style="left:987.2px;top:1.5px"></div><div class="cb" style="left:1020.2px;top:1.5px"></div><div class="cb" style="left:1053.2px;top:1.5px"></div><div class="cb k" style="left:1085.8px;top:1.5px"></div><div class="cb" style="left:1118.5px;top:1.5px"></div><div class="cb" style="left:1151.5px;top:1.5px"></div></div>
<div class="row" style="left:324px;top:548.40px"><div class="cl L" style="left:125.5px"><span>U1</span></div><div class="cl L" style="left:198.0px"><span>U1</span></div><div class="cl Cc" style="left:267.5px;width:71.8px"><span>10/07/2023</span></div><div class="cl R" style="left:454.0px;width:54.0px"><span>3,000</span></div><div class="cl R" style="left:509.5px;width:48.0px"><span>2,000</span></div><div class="cl R" style="left:559.0px;width:55.0px"><span>0,000</span></div><div class="cl R" style="left:615.5px;width:55.0px"><span>0,000</span></div><div class="cl R" style="left:672.0px;width:54.5px"><span>3,000</span></div><div class="cl L" style="left:731.0px"><span>U14999</span></div><div class="cl L" style="left:827.5px"><span>U19999</span></div><div class="cl L" style="left:1177.4px"><span>*A</span></div><div class="cl L" style="left:1241.4px"><span>A_U1_0000018</span></div><div class="cl L" style="left:1393.6px"><span>0</span></div><div class="cl L" style="left:1442.6px"><span>000052</span></div><div class="cl L" style="left:1491.8px"><span>MENUISERIE J</span></div><div class="cb" style="left:43.0px;top:1.5px"></div><div class="cb" style="left:987.2px;top:1.5px"></div><div class="cb" style="left:1020.2px;top:1.5px"></div><div class="cb" style="left:1053.2px;top:1.5px"></div><div class="cb k" style="left:1085.8px;top:1.5px"></div><div class="cb" style="left:1118.5px;top:1.5px"></div><div class="cb" style="left:1151.5px;top:1.5px"></div></div>
<div class="row" style="left:324px;top:564.30px"><div class="cl L" style="left:125.5px"><span>U1</span></div><div class="cl L" style="left:198.0px"><span>U1</span></div><div class="cl Cc" style="left:267.5px;width:71.8px"><span>10/07/2023</span></div><div class="cl R" style="left:454.0px;width:54.0px"><span>3,000</span></div><div class="cl R" style="left:509.5px;width:48.0px"><span>1,000</span></div><div class="cl R" style="left:559.0px;width:55.0px"><span>0,000</span></div><div class="cl R" style="left:615.5px;width:55.0px"><span>0,000</span></div><div class="cl R" style="left:672.0px;width:54.5px"><span>3,000</span></div><div class="cl L" style="left:731.0px"><span>U14999</span></div><div class="cl L" style="left:827.5px"><span>U19999</span></div><div class="cl L" style="left:1177.4px"><span>*A</span></div><div class="cl L" style="left:1241.4px"><span>A_U1_0000019</span></div><div class="cl L" style="left:1393.6px"><span>0</span></div><div class="cl L" style="left:1442.6px"><span>000052</span></div><div class="cl L" style="left:1491.8px"><span>MENUISERIE J</span></div><div class="cb" style="left:43.0px;top:1.5px"></div><div class="cb" style="left:987.2px;top:1.5px"></div><div class="cb" style="left:1020.2px;top:1.5px"></div><div class="cb" style="left:1053.2px;top:1.5px"></div><div class="cb k" style="left:1085.8px;top:1.5px"></div><div class="cb" style="left:1118.5px;top:1.5px"></div><div class="cb" style="left:1151.5px;top:1.5px"></div></div>
<div class="row" style="left:324px;top:580.20px"><div class="cl L" style="left:125.5px"><span>U1</span></div><div class="cl L" style="left:198.0px"><span>2308250001</span></div><div class="cl Cc" style="left:267.5px;width:71.8px"><span>25/08/2023</span></div><div class="cl R" style="left:454.0px;width:54.0px"><span>1,000</span></div><div class="cl R" style="left:509.5px;width:48.0px"><span>0,000</span></div><div class="cl R" style="left:559.0px;width:55.0px"><span>0,000</span></div><div class="cl R" style="left:615.5px;width:55.0px"><span>0,000</span></div><div class="cl R" style="left:672.0px;width:54.5px"><span>1,000</span></div><div class="cl L" style="left:731.0px"><span>23082500014999</span></div><div class="cl L" style="left:827.5px"><span>23082500019999</span></div><div class="cl L" style="left:923.5px"><span>2410001</span></div><div class="cl L" style="left:1177.4px"><span>*A</span></div><div class="cl L" style="left:1241.4px"><span>A_U1_0000019</span></div><div class="cl L" style="left:1393.6px"><span>0</span></div><div class="cl L" style="left:1442.6px"><span>000052</span></div><div class="cl L" style="left:1491.8px"><span>MENUISERIE J</span></div><div class="cb" style="left:43.0px;top:1.5px"></div><div class="cb" style="left:987.2px;top:1.5px"></div><div class="cb" style="left:1020.2px;top:1.5px"></div><div class="cb" style="left:1053.2px;top:1.5px"></div><div class="cb k" style="left:1085.8px;top:1.5px"></div><div class="cb" style="left:1118.5px;top:1.5px"></div><div class="cb" style="left:1151.5px;top:1.5px"></div></div>
<div class="row" style="left:324px;top:596.10px"><div class="cl L" style="left:125.5px"><span>U1</span></div><div class="cl L" style="left:198.0px"><span>U1</span></div><div class="cl Cc" style="left:267.5px;width:71.8px"><span>10/07/2023</span></div><div class="cl R" style="left:454.0px;width:54.0px"><span>2,000</span></div><div class="cl R" style="left:509.5px;width:48.0px"><span>1,000</span></div><div class="cl R" style="left:559.0px;width:55.0px"><span>0,000</span></div><div class="cl R" style="left:615.5px;width:55.0px"><span>0,000</span></div><div class="cl R" style="left:672.0px;width:54.5px"><span>2,000</span></div><div class="cl L" style="left:731.0px"><span>U14999</span></div><div class="cl L" style="left:827.5px"><span>U19999</span></div><div class="cl L" style="left:1177.4px"><span>*A</span></div><div class="cl L" style="left:1241.4px"><span>A_U1_0000020</span></div><div class="cl L" style="left:1393.6px"><span>0</span></div><div class="cl L" style="left:1442.6px"><span>000052</span></div><div class="cl L" style="left:1491.8px"><span>MENUISERIE J</span></div><div class="cb" style="left:43.0px;top:1.5px"></div><div class="cb" style="left:987.2px;top:1.5px"></div><div class="cb" style="left:1020.2px;top:1.5px"></div><div class="cb" style="left:1053.2px;top:1.5px"></div><div class="cb k" style="left:1085.8px;top:1.5px"></div><div class="cb" style="left:1118.5px;top:1.5px"></div><div class="cb" style="left:1151.5px;top:1.5px"></div></div>
<div class="row" style="left:324px;top:612.00px"><div class="cl L" style="left:125.5px"><span>U1</span></div><div class="cl L" style="left:198.0px"><span>2308250001</span></div><div class="cl Cc" style="left:267.5px;width:71.8px"><span>25/08/2023</span></div><div class="cl R" style="left:454.0px;width:54.0px"><span>1,000</span></div><div class="cl R" style="left:509.5px;width:48.0px"><span>0,000</span></div><div class="cl R" style="left:559.0px;width:55.0px"><span>0,000</span></div><div class="cl R" style="left:615.5px;width:55.0px"><span>0,000</span></div><div class="cl R" style="left:672.0px;width:54.5px"><span>1,000</span></div><div class="cl L" style="left:731.0px"><span>23082500014999</span></div><div class="cl L" style="left:827.5px"><span>23082500019999</span></div><div class="cl L" style="left:923.5px"><span>2400004</span></div><div class="cl L" style="left:1177.4px"><span>*A</span></div><div class="cl L" style="left:1241.4px"><span>A_U1_0000020</span></div><div class="cl L" style="left:1393.6px"><span>0</span></div><div class="cl L" style="left:1442.6px"><span>000052</span></div><div class="cl L" style="left:1491.8px"><span>MENUISERIE J</span></div><div class="cb" style="left:43.0px;top:1.5px"></div><div class="cb" style="left:987.2px;top:1.5px"></div><div class="cb" style="left:1020.2px;top:1.5px"></div><div class="cb" style="left:1053.2px;top:1.5px"></div><div class="cb k" style="left:1085.8px;top:1.5px"></div><div class="cb" style="left:1118.5px;top:1.5px"></div><div class="cb" style="left:1151.5px;top:1.5px"></div></div>
<div class="row" style="left:324px;top:627.90px"><div class="cl L" style="left:125.5px"><span>U1</span></div><div class="cl L" style="left:198.0px"><span>U1</span></div><div class="cl Cc" style="left:267.5px;width:71.8px"><span>10/07/2023</span></div><div class="cl R" style="left:454.0px;width:54.0px"><span>13,000</span></div><div class="cl R" style="left:509.5px;width:48.0px"><span>13,000</span></div><div class="cl R" style="left:559.0px;width:55.0px"><span>0,000</span></div><div class="cl R" style="left:615.5px;width:55.0px"><span>0,000</span></div><div class="cl R" style="left:672.0px;width:54.5px"><span>13,000</span></div><div class="cl L" style="left:731.0px"><span>U14999</span></div><div class="cl L" style="left:827.5px"><span>U19999</span></div><div class="cl L" style="left:1177.4px"><span>*A</span></div><div class="cl L" style="left:1241.4px"><span>A_U1_0000021</span></div><div class="cl L" style="left:1393.6px"><span>0</span></div><div class="cl L" style="left:1442.6px"><span>000052</span></div><div class="cl L" style="left:1491.8px"><span>MENUISERIE J</span></div><div class="cb" style="left:43.0px;top:1.5px"></div><div class="cb" style="left:987.2px;top:1.5px"></div><div class="cb" style="left:1020.2px;top:1.5px"></div><div class="cb" style="left:1053.2px;top:1.5px"></div><div class="cb k" style="left:1085.8px;top:1.5px"></div><div class="cb" style="left:1118.5px;top:1.5px"></div><div class="cb" style="left:1151.5px;top:1.5px"></div></div>
<div class="row" style="left:324px;top:643.80px"><div class="cl L" style="left:125.5px"><span>U1</span></div><div class="cl L" style="left:198.0px"><span>U1</span></div><div class="cl Cc" style="left:267.5px;width:71.8px"><span>10/07/2023</span></div><div class="cl R" style="left:454.0px;width:54.0px"><span>2,000</span></div><div class="cl R" style="left:509.5px;width:48.0px"><span>2,000</span></div><div class="cl R" style="left:559.0px;width:55.0px"><span>0,000</span></div><div class="cl R" style="left:615.5px;width:55.0px"><span>0,000</span></div><div class="cl R" style="left:672.0px;width:54.5px"><span>2,000</span></div><div class="cl L" style="left:731.0px"><span>U14999</span></div><div class="cl L" style="left:827.5px"><span>U19999</span></div><div class="cl L" style="left:1177.4px"><span>*A</span></div><div class="cl L" style="left:1241.4px"><span>A_U1_0000022</span></div><div class="cl L" style="left:1393.6px"><span>0</span></div><div class="cl L" style="left:1442.6px"><span>000052</span></div><div class="cl L" style="left:1491.8px"><span>MENUISERIE J</span></div><div class="cb" style="left:43.0px;top:1.5px"></div><div class="cb" style="left:987.2px;top:1.5px"></div><div class="cb" style="left:1020.2px;top:1.5px"></div><div class="cb" style="left:1053.2px;top:1.5px"></div><div class="cb k" style="left:1085.8px;top:1.5px"></div><div class="cb" style="left:1118.5px;top:1.5px"></div><div class="cb" style="left:1151.5px;top:1.5px"></div></div>
<div class="row" style="left:324px;top:659.70px"><div class="cl L" style="left:125.5px"><span>U1</span></div><div class="cl L" style="left:198.0px"><span>2309070003</span></div><div class="cl Cc" style="left:267.5px;width:71.8px"><span>07/09/2023</span></div><div class="cl R" style="left:454.0px;width:54.0px"><span>4,000</span></div><div class="cl R" style="left:509.5px;width:48.0px"><span>0,000</span></div><div class="cl R" style="left:559.0px;width:55.0px"><span>0,000</span></div><div class="cl R" style="left:615.5px;width:55.0px"><span>0,000</span></div><div class="cl R" style="left:672.0px;width:54.5px"><span>4,000</span></div><div class="cl L" style="left:731.0px"><span>23090700034999</span></div><div class="cl L" style="left:827.5px"><span>23090700039999</span></div><div class="cl L" style="left:923.5px"><span>2500008</span></div><div class="cl L" style="left:1177.4px"><span>*A</span></div><div class="cl L" style="left:1241.4px"><span>A_U1_0000023</span></div><div class="cl L" style="left:1393.6px"><span>0</span></div><div class="cl L" style="left:1442.6px"><span>000052</span></div><div class="cl L" style="left:1491.8px"><span>MENUISERIE J</span></div><div class="cb" style="left:43.0px;top:1.5px"></div><div class="cb" style="left:987.2px;top:1.5px"></div><div class="cb" style="left:1020.2px;top:1.5px"></div><div class="cb" style="left:1053.2px;top:1.5px"></div><div class="cb k" style="left:1085.8px;top:1.5px"></div><div class="cb" style="left:1118.5px;top:1.5px"></div><div class="cb" style="left:1151.5px;top:1.5px"></div></div>
<div class="row" style="left:324px;top:675.60px"><div class="cl L" style="left:125.5px"><span>U1</span></div><div class="cl L" style="left:198.0px"><span>U1</span></div><div class="cl Cc" style="left:267.5px;width:71.8px"><span>10/07/2023</span></div><div class="cl R" style="left:454.0px;width:54.0px"><span>12,000</span></div><div class="cl R" style="left:509.5px;width:48.0px"><span>1,000</span></div><div class="cl R" style="left:559.0px;width:55.0px"><span>0,000</span></div><div class="cl R" style="left:615.5px;width:55.0px"><span>0,000</span></div><div class="cl R" style="left:672.0px;width:54.5px"><span>12,000</span></div><div class="cl L" style="left:731.0px"><span>U14999</span></div><div class="cl L" style="left:827.5px"><span>U19999</span></div><div class="cl L" style="left:1177.4px"><span>*A</span></div><div class="cl L" style="left:1241.4px"><span>A_U1_0000023</span></div><div class="cl L" style="left:1393.6px"><span>0</span></div><div class="cl L" style="left:1442.6px"><span>000052</span></div><div class="cl L" style="left:1491.8px"><span>MENUISERIE J</span></div><div class="cb" style="left:43.0px;top:1.5px"></div><div class="cb" style="left:987.2px;top:1.5px"></div><div class="cb" style="left:1020.2px;top:1.5px"></div><div class="cb" style="left:1053.2px;top:1.5px"></div><div class="cb k" style="left:1085.8px;top:1.5px"></div><div class="cb" style="left:1118.5px;top:1.5px"></div><div class="cb" style="left:1151.5px;top:1.5px"></div></div>
<div class="row" style="left:324px;top:691.50px"><div class="cl L" style="left:125.5px"><span>U1</span></div><div class="cl L" style="left:198.0px"><span>2309060002</span></div><div class="cl Cc" style="left:267.5px;width:71.8px"><span>17/11/2023</span></div><div class="cl R" style="left:454.0px;width:54.0px"><span>7,000</span></div><div class="cl R" style="left:509.5px;width:48.0px"><span>0,000</span></div><div class="cl R" style="left:559.0px;width:55.0px"><span>0,000</span></div><div class="cl R" style="left:615.5px;width:55.0px"><span>0,000</span></div><div class="cl R" style="left:672.0px;width:54.5px"><span>7,000</span></div><div class="cl L" style="left:731.0px"><span>23090600024999</span></div><div class="cl L" style="left:827.5px"><span>23090600029999</span></div><div class="cl L" style="left:923.5px"><span>2500003</span></div><div class="cl L" style="left:1177.4px"><span>*A</span></div><div class="cl L" style="left:1241.4px"><span>A_U1_0000024</span></div><div class="cl L" style="left:1393.6px"><span>0</span></div><div class="cl L" style="left:1442.6px"><span>000052</span></div><div class="cl L" style="left:1491.8px"><span>MENUISERIE J</span></div><div class="cb" style="left:43.0px;top:1.5px"></div><div class="cb" style="left:987.2px;top:1.5px"></div><div class="cb" style="left:1020.2px;top:1.5px"></div><div class="cb" style="left:1053.2px;top:1.5px"></div><div class="cb k" style="left:1085.8px;top:1.5px"></div><div class="cb" style="left:1118.5px;top:1.5px"></div><div class="cb" style="left:1151.5px;top:1.5px"></div></div>
<div class="row" style="left:324px;top:707.40px"><div class="cl L" style="left:125.5px"><span>U1</span></div><div class="cl L" style="left:198.0px"><span>U1</span></div><div class="cl Cc" style="left:267.5px;width:71.8px"><span>10/07/2023</span></div><div class="cl R" style="left:454.0px;width:54.0px"><span>7,000</span></div><div class="cl R" style="left:509.5px;width:48.0px"><span>3,000</span></div><div class="cl R" style="left:559.0px;width:55.0px"><span>0,000</span></div><div class="cl R" style="left:615.5px;width:55.0px"><span>0,000</span></div><div class="cl R" style="left:672.0px;width:54.5px"><span>7,000</span></div><div class="cl L" style="left:731.0px"><span>U14999</span></div><div class="cl L" style="left:827.5px"><span>U19999</span></div><div class="cl L" style="left:1177.4px"><span>*A</span></div><div class="cl L" style="left:1241.4px"><span>A_U1_0000024</span></div><div class="cl L" style="left:1393.6px"><span>0</span></div><div class="cl L" style="left:1442.6px"><span>000052</span></div><div class="cl L" style="left:1491.8px"><span>MENUISERIE J</span></div><div class="cb" style="left:43.0px;top:1.5px"></div><div class="cb" style="left:987.2px;top:1.5px"></div><div class="cb" style="left:1020.2px;top:1.5px"></div><div class="cb" style="left:1053.2px;top:1.5px"></div><div class="cb k" style="left:1085.8px;top:1.5px"></div><div class="cb" style="left:1118.5px;top:1.5px"></div><div class="cb" style="left:1151.5px;top:1.5px"></div></div>
<div class="row" style="left:324px;top:723.30px"><div class="cl L" style="left:125.5px"><span>U1</span></div><div class="cl L" style="left:198.0px"><span>U1</span></div><div class="cl Cc" style="left:267.5px;width:71.8px"><span>10/07/2023</span></div><div class="cl R" style="left:454.0px;width:54.0px"><span>4,000</span></div><div class="cl R" style="left:509.5px;width:48.0px"><span>1,000</span></div><div class="cl R" style="left:559.0px;width:55.0px"><span>0,000</span></div><div class="cl R" style="left:615.5px;width:55.0px"><span>0,000</span></div><div class="cl R" style="left:672.0px;width:54.5px"><span>4,000</span></div><div class="cl L" style="left:731.0px"><span>U14999</span></div><div class="cl L" style="left:827.5px"><span>U19999</span></div><div class="cl L" style="left:1177.4px"><span>*A</span></div><div class="cl L" style="left:1241.4px"><span>A_U1_0000025</span></div><div class="cl L" style="left:1393.6px"><span>0</span></div><div class="cl L" style="left:1442.6px"><span>000127</span></div><div class="cl L" style="left:1491.8px"><span>MENUISERIE D</span></div><div class="cb" style="left:43.0px;top:1.5px"></div><div class="cb" style="left:987.2px;top:1.5px"></div><div class="cb" style="left:1020.2px;top:1.5px"></div><div class="cb" style="left:1053.2px;top:1.5px"></div><div class="cb k" style="left:1085.8px;top:1.5px"></div><div class="cb" style="left:1118.5px;top:1.5px"></div><div class="cb" style="left:1151.5px;top:1.5px"></div></div>
<div class="row" style="left:324px;top:739.20px"><div class="cl L" style="left:125.5px"><span>U1</span></div><div class="cl L" style="left:198.0px"><span>2309070001</span></div><div class="cl Cc" style="left:267.5px;width:71.8px"><span>08/09/2023</span></div><div class="cl R" style="left:454.0px;width:54.0px"><span>4,000</span></div><div class="cl R" style="left:509.5px;width:48.0px"><span>2,000</span></div><div class="cl R" style="left:559.0px;width:55.0px"><span>0,000</span></div><div class="cl R" style="left:615.5px;width:55.0px"><span>0,000</span></div><div class="cl R" style="left:672.0px;width:54.5px"><span>4,000</span></div><div class="cl L" style="left:731.0px"><span>23090700014999</span></div><div class="cl L" style="left:827.5px"><span>23090700019999</span></div><div class="cl L" style="left:923.5px"><span>2500004</span></div><div class="cl L" style="left:1177.4px"><span>*A</span></div><div class="cl L" style="left:1241.4px"><span>A_U1_0000025</span></div><div class="cl L" style="left:1393.6px"><span>0</span></div><div class="cl L" style="left:1442.6px"><span>000127</span></div><div class="cl L" style="left:1491.8px"><span>MENUISERIE D</span></div><div class="cb" style="left:43.0px;top:1.5px"></div><div class="cb" style="left:987.2px;top:1.5px"></div><div class="cb" style="left:1020.2px;top:1.5px"></div><div class="cb" style="left:1053.2px;top:1.5px"></div><div class="cb k" style="left:1085.8px;top:1.5px"></div><div class="cb" style="left:1118.5px;top:1.5px"></div><div class="cb" style="left:1151.5px;top:1.5px"></div></div>
<div class="row" style="left:324px;top:755.10px"><div class="cl L" style="left:125.5px"><span>U1</span></div><div class="cl L" style="left:198.0px"><span>2309070001</span></div><div class="cl Cc" style="left:267.5px;width:71.8px"><span>08/09/2023</span></div><div class="cl R" style="left:454.0px;width:54.0px"><span>10,000</span></div><div class="cl R" style="left:509.5px;width:48.0px"><span>0,000</span></div><div class="cl R" style="left:559.0px;width:55.0px"><span>0,000</span></div><div class="cl R" style="left:615.5px;width:55.0px"><span>0,000</span></div><div class="cl R" style="left:672.0px;width:54.5px"><span>10,000</span></div><div class="cl L" style="left:731.0px"><span>23090700014999</span></div><div class="cl L" style="left:827.5px"><span>23090700019999</span></div><div class="cl L" style="left:923.5px"><span>2500004</span></div><div class="cl L" style="left:1177.4px"><span>*A</span></div><div class="cl L" style="left:1241.4px"><span>A_U1_0000026</span></div><div class="cl L" style="left:1393.6px"><span>0</span></div><div class="cl L" style="left:1442.6px"><span>000127</span></div><div class="cl L" style="left:1491.8px"><span>MENUISERIE D</span></div><div class="cb" style="left:43.0px;top:1.5px"></div><div class="cb" style="left:987.2px;top:1.5px"></div><div class="cb" style="left:1020.2px;top:1.5px"></div><div class="cb" style="left:1053.2px;top:1.5px"></div><div class="cb k" style="left:1085.8px;top:1.5px"></div><div class="cb" style="left:1118.5px;top:1.5px"></div><div class="cb" style="left:1151.5px;top:1.5px"></div></div>
<div class="row" style="left:324px;top:771.00px"><div class="cl L" style="left:125.5px"><span>U1</span></div><div class="cl L" style="left:198.0px"><span>U1</span></div><div class="cl Cc" style="left:267.5px;width:71.8px"><span>10/07/2023</span></div><div class="cl R" style="left:454.0px;width:54.0px"><span>15,000</span></div><div class="cl R" style="left:509.5px;width:48.0px"><span>5,000</span></div><div class="cl R" style="left:559.0px;width:55.0px"><span>0,000</span></div><div class="cl R" style="left:615.5px;width:55.0px"><span>0,000</span></div><div class="cl R" style="left:672.0px;width:54.5px"><span>15,000</span></div><div class="cl L" style="left:731.0px"><span>U14999</span></div><div class="cl L" style="left:827.5px"><span>U19999</span></div><div class="cl L" style="left:1177.4px"><span>*A</span></div><div class="cl L" style="left:1241.4px"><span>A_U1_0000026</span></div><div class="cl L" style="left:1393.6px"><span>0</span></div><div class="cl L" style="left:1442.6px"><span>000127</span></div><div class="cl L" style="left:1491.8px"><span>MENUISERIE D</span></div><div class="cb" style="left:43.0px;top:1.5px"></div><div class="cb" style="left:987.2px;top:1.5px"></div><div class="cb" style="left:1020.2px;top:1.5px"></div><div class="cb" style="left:1053.2px;top:1.5px"></div><div class="cb k" style="left:1085.8px;top:1.5px"></div><div class="cb" style="left:1118.5px;top:1.5px"></div><div class="cb" style="left:1151.5px;top:1.5px"></div></div>
<div class="row" style="left:324px;top:786.90px"><div class="cl L" style="left:125.5px"><span>U1</span></div><div class="cl L" style="left:198.0px"><span>U1</span></div><div class="cl Cc" style="left:267.5px;width:71.8px"><span>10/07/2023</span></div><div class="cl R" style="left:454.0px;width:54.0px"><span>2,000</span></div><div class="cl R" style="left:509.5px;width:48.0px"><span>0,000</span></div><div class="cl R" style="left:559.0px;width:55.0px"><span>0,000</span></div><div class="cl R" style="left:615.5px;width:55.0px"><span>0,000</span></div><div class="cl R" style="left:672.0px;width:54.5px"><span>2,000</span></div><div class="cl L" style="left:731.0px"><span>U14999</span></div><div class="cl L" style="left:827.5px"><span>U19999</span></div><div class="cl L" style="left:1177.4px"><span>*A</span></div><div class="cl L" style="left:1241.4px"><span>A_U1_0000027</span></div><div class="cl L" style="left:1393.6px"><span>0</span></div><div class="cl L" style="left:1442.6px"><span>000052</span></div><div class="cl L" style="left:1491.8px"><span>MENUISERIE J</span></div><div class="cb" style="left:43.0px;top:1.5px"></div><div class="cb" style="left:987.2px;top:1.5px"></div><div class="cb" style="left:1020.2px;top:1.5px"></div><div class="cb" style="left:1053.2px;top:1.5px"></div><div class="cb k" style="left:1085.8px;top:1.5px"></div><div class="cb" style="left:1118.5px;top:1.5px"></div><div class="cb" style="left:1151.5px;top:1.5px"></div></div>
<div class="row" style="left:324px;top:802.80px"><div class="cl L" style="left:125.5px"><span>U1</span></div><div class="cl L" style="left:198.0px"><span>2309080003</span></div><div class="cl Cc" style="left:267.5px;width:71.8px"><span>08/09/2023</span></div><div class="cl R" style="left:454.0px;width:54.0px"><span>1,000</span></div><div class="cl R" style="left:509.5px;width:48.0px"><span>1,000</span></div><div class="cl R" style="left:559.0px;width:55.0px"><span>0,000</span></div><div class="cl R" style="left:615.5px;width:55.0px"><span>0,000</span></div><div class="cl R" style="left:672.0px;width:54.5px"><span>1,000</span></div><div class="cl L" style="left:731.0px"><span>23090800034999</span></div><div class="cl L" style="left:827.5px"><span>23090800039999</span></div><div class="cl L" style="left:923.5px"><span>2510003</span></div><div class="cl L" style="left:1177.4px"><span>*A</span></div><div class="cl L" style="left:1241.4px"><span>A_U1_0000027</span></div><div class="cl L" style="left:1393.6px"><span>0</span></div><div class="cl L" style="left:1442.6px"><span>000052</span></div><div class="cl L" style="left:1491.8px"><span>MENUISERIE J</span></div><div class="cb" style="left:43.0px;top:1.5px"></div><div class="cb" style="left:987.2px;top:1.5px"></div><div class="cb" style="left:1020.2px;top:1.5px"></div><div class="cb" style="left:1053.2px;top:1.5px"></div><div class="cb k" style="left:1085.8px;top:1.5px"></div><div class="cb" style="left:1118.5px;top:1.5px"></div><div class="cb" style="left:1151.5px;top:1.5px"></div></div>
<div class="row" style="left:324px;top:818.70px"><div class="cl L" style="left:125.5px"><span>U1</span></div><div class="cl L" style="left:198.0px"><span>U1</span></div><div class="cl Cc" style="left:267.5px;width:71.8px"><span>10/07/2023</span></div><div class="cl R" style="left:454.0px;width:54.0px"><span>1,000</span></div><div class="cl R" style="left:509.5px;width:48.0px"><span>0,000</span></div><div class="cl R" style="left:559.0px;width:55.0px"><span>0,000</span></div><div class="cl R" style="left:615.5px;width:55.0px"><span>0,000</span></div><div class="cl R" style="left:672.0px;width:54.5px"><span>1,000</span></div><div class="cl L" style="left:731.0px"><span>U14999</span></div><div class="cl L" style="left:827.5px"><span>U19999</span></div><div class="cl L" style="left:1177.4px"><span>*A</span></div><div class="cl L" style="left:1241.4px"><span>A_U1_0000028</span></div><div class="cl L" style="left:1393.6px"><span>0</span></div><div class="cl L" style="left:1442.6px"><span>000052</span></div><div class="cl L" style="left:1491.8px"><span>MENUISERIE J</span></div><div class="cb" style="left:43.0px;top:1.5px"></div><div class="cb" style="left:987.2px;top:1.5px"></div><div class="cb" style="left:1020.2px;top:1.5px"></div><div class="cb" style="left:1053.2px;top:1.5px"></div><div class="cb k" style="left:1085.8px;top:1.5px"></div><div class="cb" style="left:1118.5px;top:1.5px"></div><div class="cb" style="left:1151.5px;top:1.5px"></div></div>
<div class="row" style="left:324px;top:834.60px"><div class="cl L" style="left:125.5px"><span>U1</span></div><div class="cl L" style="left:198.0px"><span>2309140001</span></div><div class="cl Cc" style="left:267.5px;width:71.8px"><span>14/09/2023</span></div><div class="cl R" style="left:454.0px;width:54.0px"><span>14,000</span></div><div class="cl R" style="left:509.5px;width:48.0px"><span>7,000</span></div><div class="cl R" style="left:559.0px;width:55.0px"><span>0,000</span></div><div class="cl R" style="left:615.5px;width:55.0px"><span>0,000</span></div><div class="cl R" style="left:672.0px;width:54.5px"><span>14,000</span></div><div class="cl L" style="left:731.0px"><span>23091400014999</span></div><div class="cl L" style="left:827.5px"><span>23091400019999</span></div><div class="cl L" style="left:923.5px"><span>2640003</span></div><div class="cl L" style="left:1177.4px"><span>*A</span></div><div class="cl L" style="left:1241.4px"><span>A_U1_0000029</span></div><div class="cl L" style="left:1393.6px"><span>0</span></div><div class="cl L" style="left:1442.6px"><span>000052</span></div><div class="cl L" style="left:1491.8px"><span>MENUISERIE J</span></div><div class="cb" style="left:43.0px;top:1.5px"></div><div class="cb" style="left:987.2px;top:1.5px"></div><div class="cb" style="left:1020.2px;top:1.5px"></div><div class="cb" style="left:1053.2px;top:1.5px"></div><div class="cb k" style="left:1085.8px;top:1.5px"></div><div class="cb" style="left:1118.5px;top:1.5px"></div><div class="cb" style="left:1151.5px;top:1.5px"></div></div>
<div class="row" style="left:324px;top:850.50px"><div class="cl L" style="left:125.5px"><span>U1</span></div><div class="cl L" style="left:198.0px"><span>U1</span></div><div class="cl Cc" style="left:267.5px;width:71.8px"><span>10/07/2023</span></div><div class="cl R" style="left:454.0px;width:54.0px"><span>14,000</span></div><div class="cl R" style="left:509.5px;width:48.0px"><span>0,000</span></div><div class="cl R" style="left:559.0px;width:55.0px"><span>0,000</span></div><div class="cl R" style="left:615.5px;width:55.0px"><span>0,000</span></div><div class="cl R" style="left:672.0px;width:54.5px"><span>14,000</span></div><div class="cl L" style="left:731.0px"><span>U14999</span></div><div class="cl L" style="left:827.5px"><span>U19999</span></div><div class="cl L" style="left:1177.4px"><span>*A</span></div><div class="cl L" style="left:1241.4px"><span>A_U1_0000029</span></div><div class="cl L" style="left:1393.6px"><span>0</span></div><div class="cl L" style="left:1442.6px"><span>000052</span></div><div class="cl L" style="left:1491.8px"><span>MENUISERIE J</span></div><div class="cb" style="left:43.0px;top:1.5px"></div><div class="cb" style="left:987.2px;top:1.5px"></div><div class="cb" style="left:1020.2px;top:1.5px"></div><div class="cb" style="left:1053.2px;top:1.5px"></div><div class="cb k" style="left:1085.8px;top:1.5px"></div><div class="cb" style="left:1118.5px;top:1.5px"></div><div class="cb" style="left:1151.5px;top:1.5px"></div></div>
<div class="row" style="left:324px;top:866.40px"><div class="cl L" style="left:125.5px"><span>U2</span></div><div class="cl L" style="left:198.0px"><span>U2</span></div><div class="cl Cc" style="left:267.5px;width:71.8px"><span>07/07/2023</span></div><div class="cl R" style="left:454.0px;width:54.0px"><span>2,000</span></div><div class="cl R" style="left:509.5px;width:48.0px"><span>0,000</span></div><div class="cl R" style="left:559.0px;width:55.0px"><span>0,000</span></div><div class="cl R" style="left:615.5px;width:55.0px"><span>0,000</span></div><div class="cl R" style="left:672.0px;width:54.5px"><span>2,000</span></div><div class="cl L" style="left:731.0px"><span>U24999</span></div><div class="cl L" style="left:827.5px"><span>U29999</span></div><div class="cl L" style="left:1177.4px"><span>*A</span></div><div class="cl L" style="left:1241.4px"><span>A_U2_0000001</span></div><div class="cl L" style="left:1393.6px"><span>0</span></div><div class="cl L" style="left:1442.6px"><span>000125</span></div><div class="cl L" style="left:1491.8px"><span>MENUISERIE J</span></div><div class="cb" style="left:43.0px;top:1.5px"></div><div class="cb" style="left:987.2px;top:1.5px"></div><div class="cb" style="left:1020.2px;top:1.5px"></div><div class="cb" style="left:1053.2px;top:1.5px"></div><div class="cb k" style="left:1085.8px;top:1.5px"></div><div class="cb" style="left:1118.5px;top:1.5px"></div><div class="cb" style="left:1151.5px;top:1.5px"></div></div>
<div class="row" style="left:324px;top:882.30px"><div class="cl L" style="left:125.5px"><span>Gen</span></div><div class="cl L" style="left:198.0px"><span>2107150001</span></div><div class="cl Cc" style="left:267.5px;width:71.8px"><span>16/07/2021</span></div><div class="cl R" style="left:454.0px;width:54.0px"><span>1,000</span></div><div class="cl R" style="left:509.5px;width:48.0px"><span>0,000</span></div><div class="cl R" style="left:559.0px;width:55.0px"><span>0,000</span></div><div class="cl R" style="left:615.5px;width:55.0px"><span>0,000</span></div><div class="cl R" style="left:672.0px;width:54.5px"><span>1,000</span></div><div class="cl L" style="left:731.0px"><span>21071500014999</span></div><div class="cl L" style="left:827.5px"><span>21071500019999</span></div><div class="cl L" style="left:1177.4px"><span>*A</span></div><div class="cl L" style="left:1241.4px"><span>COL150604000067</span></div><div class="cl L" style="left:1393.6px"><span>01</span></div><div class="cl L" style="left:1442.6px"><span>000032</span></div><div class="cl L" style="left:1491.8px"><span>BIGMAT CAEN</span></div><div class="cb" style="left:43.0px;top:1.5px"></div><div class="cb" style="left:987.2px;top:1.5px"></div><div class="cb" style="left:1020.2px;top:1.5px"></div><div class="cb" style="left:1053.2px;top:1.5px"></div><div class="cb" style="left:1085.8px;top:1.5px"></div><div class="cb" style="left:1118.5px;top:1.5px"></div><div class="cb" style="left:1151.5px;top:1.5px"></div></div>
<div class="row" style="left:324px;top:898.20px"><div class="cl L" style="left:125.5px"><span>Gen</span></div><div class="cl L" style="left:198.0px"><span>2111160002</span></div><div class="cl Cc" style="left:267.5px;width:71.8px"><span>18/11/2021</span></div><div class="cl R" style="left:454.0px;width:54.0px"><span>1,000</span></div><div class="cl R" style="left:509.5px;width:48.0px"><span>0,000</span></div><div class="cl R" style="left:559.0px;width:55.0px"><span>0,000</span></div><div class="cl R" style="left:615.5px;width:55.0px"><span>0,000</span></div><div class="cl R" style="left:672.0px;width:54.5px"><span>1,000</span></div><div class="cl L" style="left:731.0px"><span>21111600024999</span></div><div class="cl L" style="left:827.5px"><span>21111600029999</span></div><div class="cl L" style="left:1177.4px"><span>*A</span></div><div class="cl L" style="left:1241.4px"><span>COL170105000072</span></div><div class="cl L" style="left:1393.6px"><span>01</span></div><div class="cl L" style="left:1442.6px"><span>000051</span></div><div class="cl L" style="left:1491.8px"><span>POINT P PAU</span></div><div class="cb" style="left:43.0px;top:1.5px"></div><div class="cb" style="left:987.2px;top:1.5px"></div><div class="cb" style="left:1020.2px;top:1.5px"></div><div class="cb" style="left:1053.2px;top:1.5px"></div><div class="cb" style="left:1085.8px;top:1.5px"></div><div class="cb" style="left:1118.5px;top:1.5px"></div><div class="cb" style="left:1151.5px;top:1.5px"></div></div>
<div class="row" style="left:324px;top:914.10px"><div class="cl L" style="left:125.5px"><span>Gen</span></div><div class="cl L" style="left:198.0px"><span>180001</span></div><div class="cl Cc" style="left:267.5px;width:71.8px"><span>29/06/2021</span></div><div class="cl R" style="left:454.0px;width:54.0px"><span>1,000</span></div><div class="cl R" style="left:509.5px;width:48.0px"><span>1,000</span></div><div class="cl R" style="left:559.0px;width:55.0px"><span>0,000</span></div><div class="cl R" style="left:615.5px;width:55.0px"><span>0,000</span></div><div class="cl R" style="left:672.0px;width:54.5px"><span>1,000</span></div><div class="cl L" style="left:731.0px"><span>1800014999</span></div><div class="cl L" style="left:827.5px"><span>1800019999</span></div><div class="cl L" style="left:923.5px"><span>1800001</span></div><div class="cl L" style="left:1177.4px"><span>*A</span></div><div class="cl L" style="left:1241.4px"><span>COL210629000140</span></div><div class="cl L" style="left:1393.6px"><span>01</span></div><div class="cl L" style="left:1442.6px"><span>000001</span></div><div class="cl L" style="left:1491.8px"><span>MAISONS D&#39;EN</span></div><div class="cb" style="left:43.0px;top:1.5px"></div><div class="cb" style="left:987.2px;top:1.5px"></div><div class="cb" style="left:1020.2px;top:1.5px"></div><div class="cb" style="left:1053.2px;top:1.5px"></div><div class="cb" style="left:1085.8px;top:1.5px"></div><div class="cb" style="left:1118.5px;top:1.5px"></div><div class="cb" style="left:1151.5px;top:1.5px"></div></div>
<div class="row" style="left:324px;top:930.00px"><div class="cl L" style="left:125.5px"><span>Gen</span></div><div class="cl L" style="left:198.0px"><span>2106300003</span></div><div class="cl Cc" style="left:267.5px;width:71.8px"><span>30/06/2021</span></div><div class="cl R" style="left:454.0px;width:54.0px"><span>1,000</span></div><div class="cl R" style="left:509.5px;width:48.0px"><span>0,000</span></div><div class="cl R" style="left:559.0px;width:55.0px"><span>0,000</span></div><div class="cl R" style="left:615.5px;width:55.0px"><span>0,000</span></div><div class="cl R" style="left:672.0px;width:54.5px"><span>1,000</span></div><div class="cl L" style="left:731.0px"><span>21063000034999</span></div><div class="cl L" style="left:827.5px"><span>21063000039999</span></div><div class="cl L" style="left:1177.4px"><span>*A</span></div><div class="cl L" style="left:1241.4px"><span>COL210630000144</span></div><div class="cl L" style="left:1393.6px"><span>01</span></div><div class="cl L" style="left:1442.6px"><span>000001</span></div><div class="cl L" style="left:1491.8px"><span>MAISONS D&#39;EN</span></div><div class="cb" style="left:43.0px;top:1.5px"></div><div class="cb" style="left:987.2px;top:1.5px"></div><div class="cb" style="left:1020.2px;top:1.5px"></div><div class="cb" style="left:1053.2px;top:1.5px"></div><div class="cb" style="left:1085.8px;top:1.5px"></div><div class="cb" style="left:1118.5px;top:1.5px"></div><div class="cb" style="left:1151.5px;top:1.5px"></div></div>
<div class="row" style="left:324px;top:945.90px"><div class="cl L" style="left:125.5px"><span>Gen</span></div><div class="cl L" style="left:198.0px"><span>2106300003</span></div><div class="cl Cc" style="left:267.5px;width:71.8px"><span>30/06/2021</span></div><div class="cl R" style="left:454.0px;width:54.0px"><span>1,000</span></div><div class="cl R" style="left:509.5px;width:48.0px"><span>0,000</span></div><div class="cl R" style="left:559.0px;width:55.0px"><span>0,000</span></div><div class="cl R" style="left:615.5px;width:55.0px"><span>0,000</span></div><div class="cl R" style="left:672.0px;width:54.5px"><span>1,000</span></div><div class="cl L" style="left:731.0px"><span>21063000034999</span></div><div class="cl L" style="left:827.5px"><span>21063000039999</span></div><div class="cl L" style="left:1177.4px"><span>*A</span></div><div class="cl L" style="left:1241.4px"><span>COL210630000145</span></div><div class="cl L" style="left:1393.6px"><span>01</span></div><div class="cl L" style="left:1442.6px"><span>000001</span></div><div class="cl L" style="left:1491.8px"><span>MAISONS D&#39;EN</span></div><div class="cb" style="left:43.0px;top:1.5px"></div><div class="cb" style="left:987.2px;top:1.5px"></div><div class="cb" style="left:1020.2px;top:1.5px"></div><div class="cb" style="left:1053.2px;top:1.5px"></div><div class="cb" style="left:1085.8px;top:1.5px"></div><div class="cb" style="left:1118.5px;top:1.5px"></div><div class="cb" style="left:1151.5px;top:1.5px"></div></div>
<div class="a" style="left:357px;top:214.5px;width:33.5px;height:16.5px;border:solid #111;border-width:1px 2.5px 2.5px 1.5px"></div>
<div class="a" style="left:323.5px;top:196.5px;width:1px;height:782px;background:#7d7f82"></div>
<div class="a" style="left:356.5px;top:214.5px;width:1px;height:747.3000000000001px;background:repeating-linear-gradient(#b8c4d2 0,#b8c4d2 1px,transparent 1px,transparent 2px)"></div>
<div class="a" style="left:1889.6px;top:196.5px;width:15.5px;height:766px;background:#6f98c9"></div>
<div class="a" style="left:1890px;top:197px;width:15px;height:16px;background:linear-gradient(90deg,#dbe7f3,#c4d6ea);border:1px solid #9fb8d6"></div>
<div class="tri" style="left:1892px;top:202px;border-top:0;border-bottom:5px solid #2f3f55;border-left-width:5px;border-right-width:5px"></div>
<div class="a" style="left:1890px;top:213px;width:15px;height:75px;background:linear-gradient(90deg,#dfeaf5,#cbdcee);border:1px solid #a9c0db"></div>
<div class="a" style="left:1890px;top:948px;width:15px;height:15px;background:linear-gradient(90deg,#dbe7f3,#c4d6ea);border:1px solid #9fb8d6"></div>
<div class="tri" style="left:1892px;top:953px;border-top-color:#2f3f55"></div>
<div class="a" style="left:324px;top:962.5px;width:1581px;height:16.5px;background:#6f98c9"></div>
<div class="a" style="left:324px;top:963px;width:16px;height:16px;background:linear-gradient(#dbe7f3,#c4d6ea);border:1px solid #9fb8d6"></div>
<div class="tri" style="left:328px;top:966px;border:5px solid transparent;border-left:0;border-right:5px solid #2f3f55"></div>
<div class="a" style="left:340.5px;top:963px;width:285.5px;height:16px;background:linear-gradient(#dfeaf5,#cbdcee);border:1px solid #a9c0db"></div>
<div class="a" style="left:1874px;top:963px;width:15.5px;height:16px;background:linear-gradient(#dbe7f3,#c4d6ea);border:1px solid #9fb8d6"></div>
<div class="tri" style="left:1880px;top:966px;border:5px solid transparent;border-right:0;border-left:5px solid #2f3f55"></div>
<div class="a" style="left:1889.6px;top:963px;width:15.5px;height:16px;background:#93b2d8"></div>
<div class="a" style="left:324px;top:979px;width:1583px;height:31px;background:#f1f0ee"></div>
<div class="a" style="left:329.5px;top:985.5px;width:65.5px;height:19.5px;background:linear-gradient(#f6f6f6,#e6e6e6);border:1px solid #c4c4c4"></div>
<svg class="a" style="left:338px;top:989px" width="13" height="13"><path d="M2 2L11 11M11 2L2 11" stroke="#e8743a" stroke-width="3" stroke-linecap="round"/></svg>
<div class="a" style="left:356px;top:989px;font-size:12px;line-height:13px;color:#222;white-space:nowrap"><span style="display:inline-block;transform:scaleX(.85);transform-origin:0 50%">Fermer</span></div>
<div class="a" style="left:0px;top:1010px;width:1907px;height:25px;background:#e9eff4"></div>
<div class="a" style="left:0px;top:1010px;width:1907px;height:1px;background:#f8fafc"></div>
<svg class="a" style="left:1888px;top:1017px" width="10" height="10"><g fill="#8a96a3"><rect x="7" y="1" width="1.5" height="1.5"/><rect x="4" y="4" width="1.5" height="1.5"/><rect x="7" y="4" width="1.5" height="1.5"/><rect x="1" y="7" width="1.5" height="1.5"/><rect x="4" y="7" width="1.5" height="1.5"/><rect x="7" y="7" width="1.5" height="1.5"/></g></svg>
<svg class="a" style="left:-1px;top:304px" width="14" height="20"><path d="M1 1V16L5 12L8 19L10.5 18L7.5 11H13Z" fill="#fff" stroke="#333" stroke-width="1"/></svg>
<div class="a" style="left:8px;top:267px;width:670px;height:68.8px;background:#fdfdfc;border-radius:8px;box-shadow:16px 8px 18px -4px rgba(240,175,60,.6)"></div>
<div class="a" style="left:110px;top:281px;font-size:36px;line-height:42px;color:#2f3c48;letter-spacing:1.55px;white-space:nowrap;-webkit-text-stroke:0.45px #fdfdfc">Je clique sur le Navigateur</div>
</div>
<div class="a" style="left:0;top:193px;width:52px;height:40px;background:rgba(225,192,0,.36);border-radius:7px"></div>
<div class="a" style="left:6px;top:1036px;width:1907px;height:4px;background:#d9d4d8"></div>
<div class="a" style="left:55px;top:1036px;width:340px;height:4px;background:#fbfbfb"></div>
</body></html>
